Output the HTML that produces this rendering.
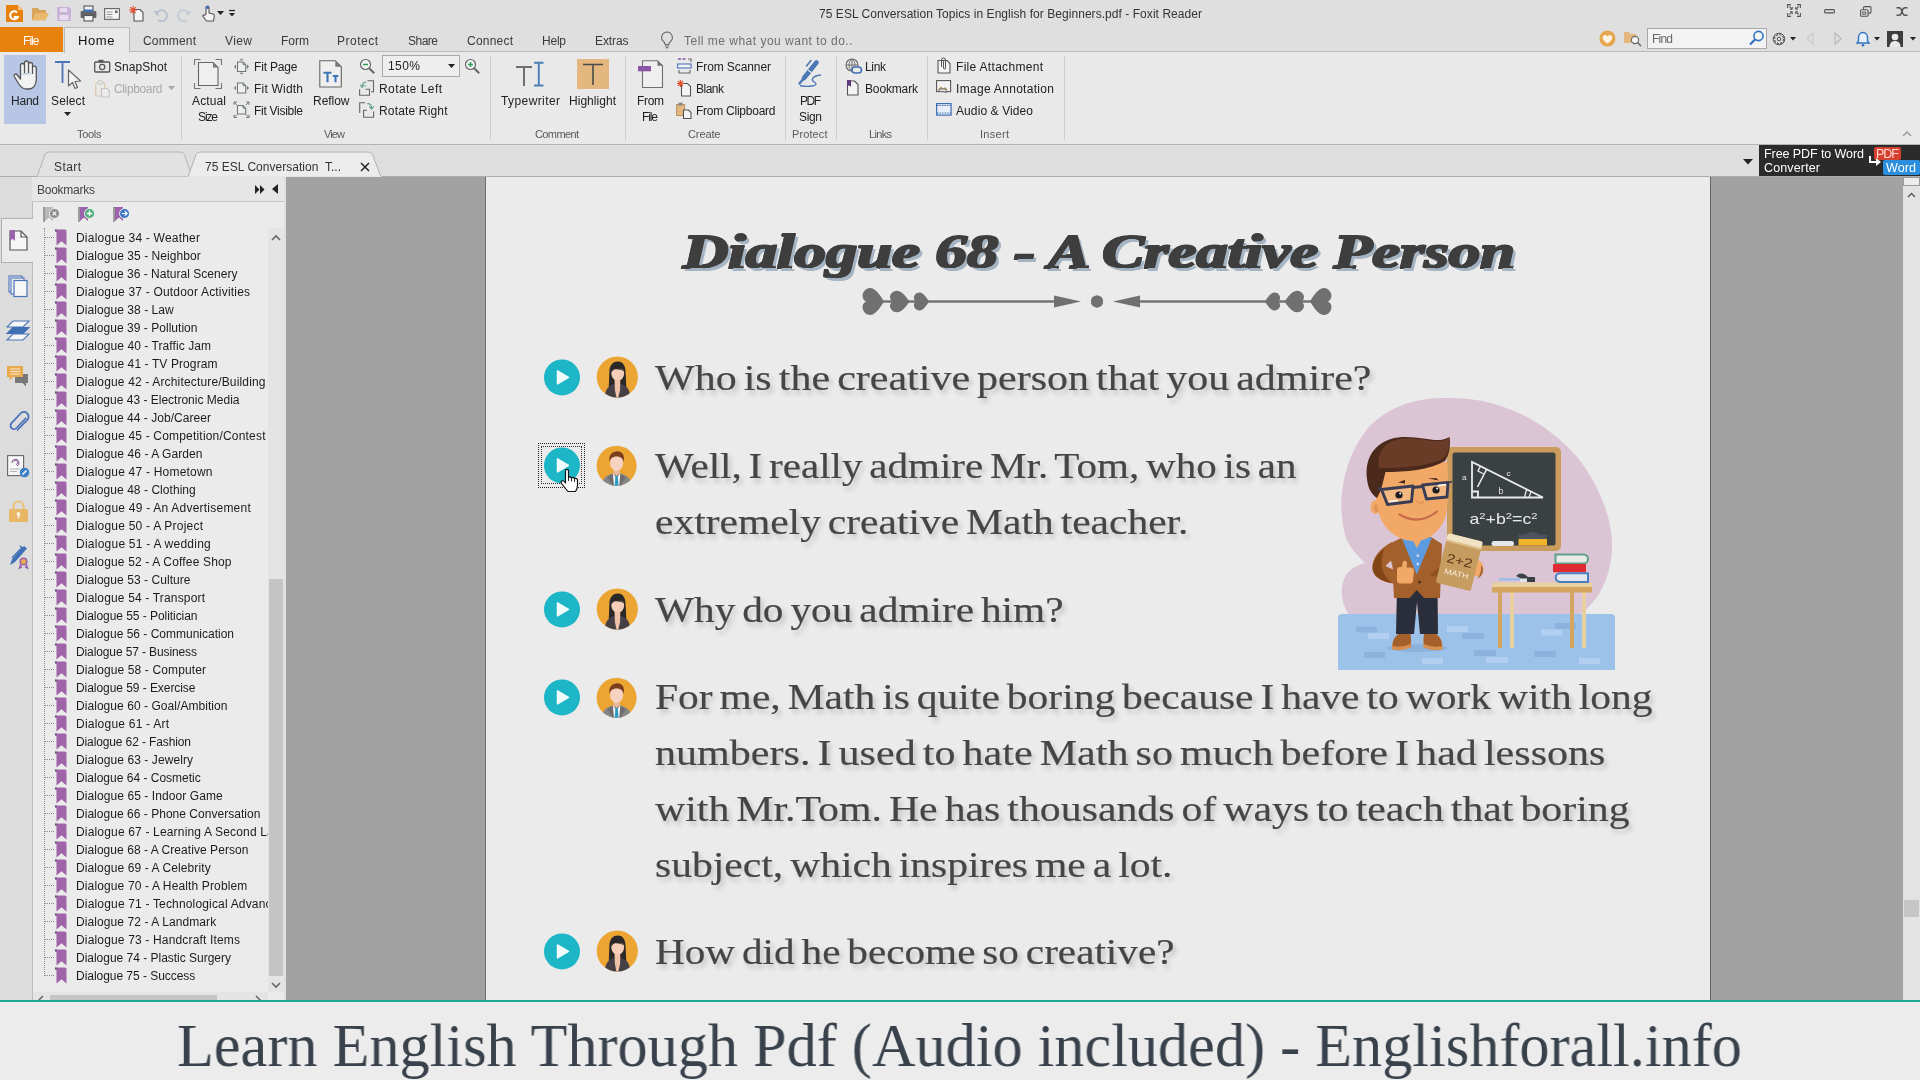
<!DOCTYPE html>
<html><head><meta charset="utf-8"><title>Foxit Reader</title>
<style>
html,body{margin:0;padding:0;overflow:hidden;}
html{width:1920px;height:1080px;}
body{width:1920px;height:1080px;overflow:hidden;position:relative;background:#a2a2a2;font-family:"Liberation Sans", sans-serif;font-size:12px;}
.a{position:absolute;}
span{will-change:transform;}
svg{position:absolute;overflow:visible;}
</style></head><body>
<div class='a' style='left:0px;top:0px;width:1920px;height:52px;background:#dfdfdf;'></div><div class='a' style='left:0px;top:52px;width:1920px;height:93px;background:#e9e9e9;'></div><div class='a' style='left:0px;top:51px;width:1920px;height:1px;background:#b9b9b9;'></div><div class='a' style='left:0px;top:144px;width:1920px;height:1px;background:#b4b4b4;'></div><div class='a' style='left:0px;top:27px;width:63px;height:25px;background:#e8820f;'></div><span style='position:absolute;left:23px;top:32.64px;line-height:16px;color:#ffffff;font-family:"Liberation Sans", sans-serif;font-size:12px;font-weight:400;font-style:normal;white-space:pre;letter-spacing:-0.948px;'>File</span><div class='a' style='left:64px;top:27px;width:66px;height:25px;background:#e9e9e9;border:1px solid #b9b9b9;border-bottom:none;box-sizing:border-box;height:26px;'></div><span style='position:absolute;left:78px;top:32.15px;line-height:17px;color:#111;font-family:"Liberation Sans", sans-serif;font-size:13px;font-weight:400;font-style:normal;white-space:pre;letter-spacing:0.604px;'>Home</span><span style='position:absolute;left:143px;top:32.64px;line-height:16px;color:#3a3a3a;font-family:"Liberation Sans", sans-serif;font-size:12px;font-weight:400;font-style:normal;white-space:pre;letter-spacing:0.164px;'>Comment</span><span style='position:absolute;left:225px;top:32.64px;line-height:16px;color:#3a3a3a;font-family:"Liberation Sans", sans-serif;font-size:12px;font-weight:400;font-style:normal;white-space:pre;letter-spacing:0.401px;'>View</span><span style='position:absolute;left:281px;top:32.64px;line-height:16px;color:#3a3a3a;font-family:"Liberation Sans", sans-serif;font-size:12px;font-weight:400;font-style:normal;white-space:pre;letter-spacing:0.000px;'>Form</span><span style='position:absolute;left:337px;top:32.64px;line-height:16px;color:#3a3a3a;font-family:"Liberation Sans", sans-serif;font-size:12px;font-weight:400;font-style:normal;white-space:pre;letter-spacing:0.497px;'>Protect</span><span style='position:absolute;left:407.5px;top:32.64px;line-height:16px;color:#3a3a3a;font-family:"Liberation Sans", sans-serif;font-size:12px;font-weight:400;font-style:normal;white-space:pre;letter-spacing:-0.508px;'>Share</span><span style='position:absolute;left:467px;top:32.64px;line-height:16px;color:#3a3a3a;font-family:"Liberation Sans", sans-serif;font-size:12px;font-weight:400;font-style:normal;white-space:pre;letter-spacing:0.216px;'>Connect</span><span style='position:absolute;left:542px;top:32.64px;line-height:16px;color:#3a3a3a;font-family:"Liberation Sans", sans-serif;font-size:12px;font-weight:400;font-style:normal;white-space:pre;letter-spacing:-0.229px;'>Help</span><span style='position:absolute;left:595px;top:32.64px;line-height:16px;color:#3a3a3a;font-family:"Liberation Sans", sans-serif;font-size:12px;font-weight:400;font-style:normal;white-space:pre;letter-spacing:-0.103px;'>Extras</span><span style='position:absolute;left:684px;top:32.64px;line-height:16px;color:#6e6e6e;font-family:"Liberation Sans", sans-serif;font-size:12px;font-weight:400;font-style:normal;white-space:pre;letter-spacing:0.491px;'>Tell me what you want to do..</span><svg style='left:660px;top:31px' width='14' height='18' viewBox='0 0 14 18'><path d='M7 1a5.500 5.500 0 0 1 3 10c-.8.800-1 1.500-1 2.500H5c0-1-.2-1.700-1-2.500A5.500 5.500 0 0 1 7 1z' fill='none' stroke='#6a6a6a' stroke-width='1.100'/><path d='M5 15h4M5.500 16.800h3' stroke='#6a6a6a' stroke-width='1.100'/></svg><span style='position:absolute;left:819px;top:5.74px;line-height:16px;color:#333;font-family:"Liberation Sans", sans-serif;font-size:12px;font-weight:400;font-style:normal;white-space:pre;letter-spacing:0.050px;'>75 ESL Conversation Topics in English for Beginners.pdf - Foxit Reader</span><div class='a' style='left:4px;top:55px;width:42px;height:69px;background:#b6c6e4;'></div><div class='a' style='left:382px;top:55px;width:78px;height:22px;background:#eeeeee;border:1px solid #a8a8a8;box-sizing:border-box;'></div><span style='position:absolute;left:11px;top:92.64px;line-height:16px;color:#222;font-family:"Liberation Sans", sans-serif;font-size:12px;font-weight:400;font-style:normal;white-space:pre;letter-spacing:-0.229px;'>Hand</span><span style='position:absolute;left:51px;top:92.64px;line-height:16px;color:#222;font-family:"Liberation Sans", sans-serif;font-size:12px;font-weight:400;font-style:normal;white-space:pre;letter-spacing:0.128px;'>Select</span><span style='position:absolute;left:114px;top:58.64px;line-height:16px;color:#222;font-family:"Liberation Sans", sans-serif;font-size:12px;font-weight:400;font-style:normal;white-space:pre;letter-spacing:0.040px;'>SnapShot</span><span style='position:absolute;left:114px;top:80.64px;line-height:16px;color:#a9a9a9;font-family:"Liberation Sans", sans-serif;font-size:12px;font-weight:400;font-style:normal;white-space:pre;letter-spacing:-0.359px;'>Clipboard</span><span style='position:absolute;left:192px;top:92.64px;line-height:16px;color:#222;font-family:"Liberation Sans", sans-serif;font-size:12px;font-weight:400;font-style:normal;white-space:pre;letter-spacing:0.128px;'>Actual</span><span style='position:absolute;left:197.5px;top:108.64px;line-height:16px;color:#222;font-family:"Liberation Sans", sans-serif;font-size:12px;font-weight:400;font-style:normal;white-space:pre;letter-spacing:-1.115px;'>Size</span><span style='position:absolute;left:254px;top:58.64px;line-height:16px;color:#222;font-family:"Liberation Sans", sans-serif;font-size:12px;font-weight:400;font-style:normal;white-space:pre;letter-spacing:-0.172px;'>Fit Page</span><span style='position:absolute;left:254px;top:80.64px;line-height:16px;color:#222;font-family:"Liberation Sans", sans-serif;font-size:12px;font-weight:400;font-style:normal;white-space:pre;letter-spacing:0.207px;'>Fit Width</span><span style='position:absolute;left:254px;top:102.64px;line-height:16px;color:#222;font-family:"Liberation Sans", sans-serif;font-size:12px;font-weight:400;font-style:normal;white-space:pre;letter-spacing:-0.280px;'>Fit Visible</span><span style='position:absolute;left:313px;top:92.64px;line-height:16px;color:#222;font-family:"Liberation Sans", sans-serif;font-size:12px;font-weight:400;font-style:normal;white-space:pre;letter-spacing:-0.037px;'>Reflow</span><span style='position:absolute;left:387.5px;top:58.14px;line-height:16px;color:#222;font-family:"Liberation Sans", sans-serif;font-size:12px;font-weight:400;font-style:normal;white-space:pre;letter-spacing:0.432px;'>150%</span><span style='position:absolute;left:379px;top:80.64px;line-height:16px;color:#222;font-family:"Liberation Sans", sans-serif;font-size:12px;font-weight:400;font-style:normal;white-space:pre;letter-spacing:0.428px;'>Rotate Left</span><span style='position:absolute;left:379px;top:102.64px;line-height:16px;color:#222;font-family:"Liberation Sans", sans-serif;font-size:12px;font-weight:400;font-style:normal;white-space:pre;letter-spacing:0.163px;'>Rotate Right</span><span style='position:absolute;left:501px;top:92.64px;line-height:16px;color:#222;font-family:"Liberation Sans", sans-serif;font-size:12px;font-weight:400;font-style:normal;white-space:pre;letter-spacing:0.405px;'>Typewriter</span><span style='position:absolute;left:569px;top:92.64px;line-height:16px;color:#222;font-family:"Liberation Sans", sans-serif;font-size:12px;font-weight:400;font-style:normal;white-space:pre;letter-spacing:0.037px;'>Highlight</span><span style='position:absolute;left:637px;top:92.64px;line-height:16px;color:#222;font-family:"Liberation Sans", sans-serif;font-size:12px;font-weight:400;font-style:normal;white-space:pre;letter-spacing:-0.333px;'>From</span><span style='position:absolute;left:642px;top:108.64px;line-height:16px;color:#222;font-family:"Liberation Sans", sans-serif;font-size:12px;font-weight:400;font-style:normal;white-space:pre;letter-spacing:-1.115px;'>File</span><span style='position:absolute;left:696px;top:58.64px;line-height:16px;color:#222;font-family:"Liberation Sans", sans-serif;font-size:12px;font-weight:400;font-style:normal;white-space:pre;letter-spacing:-0.094px;'>From Scanner</span><span style='position:absolute;left:696px;top:80.64px;line-height:16px;color:#222;font-family:"Liberation Sans", sans-serif;font-size:12px;font-weight:400;font-style:normal;white-space:pre;letter-spacing:-0.508px;'>Blank</span><span style='position:absolute;left:696px;top:102.64px;line-height:16px;color:#222;font-family:"Liberation Sans", sans-serif;font-size:12px;font-weight:400;font-style:normal;white-space:pre;letter-spacing:-0.246px;'>From Clipboard</span><span style='position:absolute;left:800px;top:92.64px;line-height:16px;color:#222;font-family:"Liberation Sans", sans-serif;font-size:12px;font-weight:400;font-style:normal;white-space:pre;letter-spacing:-1.500px;'>PDF</span><span style='position:absolute;left:799px;top:108.64px;line-height:16px;color:#222;font-family:"Liberation Sans", sans-serif;font-size:12px;font-weight:400;font-style:normal;white-space:pre;letter-spacing:-0.344px;'>Sign</span><span style='position:absolute;left:865px;top:58.64px;line-height:16px;color:#222;font-family:"Liberation Sans", sans-serif;font-size:12px;font-weight:400;font-style:normal;white-space:pre;letter-spacing:-0.339px;'>Link</span><span style='position:absolute;left:865px;top:80.64px;line-height:16px;color:#222;font-family:"Liberation Sans", sans-serif;font-size:12px;font-weight:400;font-style:normal;white-space:pre;letter-spacing:-0.147px;'>Bookmark</span><span style='position:absolute;left:956px;top:58.64px;line-height:16px;color:#222;font-family:"Liberation Sans", sans-serif;font-size:12px;font-weight:400;font-style:normal;white-space:pre;letter-spacing:0.306px;'>File Attachment</span><span style='position:absolute;left:956px;top:80.64px;line-height:16px;color:#222;font-family:"Liberation Sans", sans-serif;font-size:12px;font-weight:400;font-style:normal;white-space:pre;letter-spacing:0.306px;'>Image Annotation</span><span style='position:absolute;left:956px;top:102.64px;line-height:16px;color:#222;font-family:"Liberation Sans", sans-serif;font-size:12px;font-weight:400;font-style:normal;white-space:pre;letter-spacing:0.096px;'>Audio &amp; Video</span><span style='position:absolute;left:76.5px;top:127.13px;line-height:14px;color:#5a5a5a;font-family:"Liberation Sans", sans-serif;font-size:11px;font-weight:400;font-style:normal;white-space:pre;letter-spacing:-0.297px;'>Tools</span><span style='position:absolute;left:324px;top:127.13px;line-height:14px;color:#5a5a5a;font-family:"Liberation Sans", sans-serif;font-size:11px;font-weight:400;font-style:normal;white-space:pre;letter-spacing:-0.885px;'>View</span><span style='position:absolute;left:535px;top:127.13px;line-height:14px;color:#5a5a5a;font-family:"Liberation Sans", sans-serif;font-size:11px;font-weight:400;font-style:normal;white-space:pre;letter-spacing:-0.615px;'>Comment</span><span style='position:absolute;left:687.5px;top:127.13px;line-height:14px;color:#5a5a5a;font-family:"Liberation Sans", sans-serif;font-size:11px;font-weight:400;font-style:normal;white-space:pre;letter-spacing:-0.106px;'>Create</span><span style='position:absolute;left:792px;top:127.13px;line-height:14px;color:#5a5a5a;font-family:"Liberation Sans", sans-serif;font-size:11px;font-weight:400;font-style:normal;white-space:pre;letter-spacing:0.107px;'>Protect</span><span style='position:absolute;left:869px;top:127.13px;line-height:14px;color:#5a5a5a;font-family:"Liberation Sans", sans-serif;font-size:11px;font-weight:400;font-style:normal;white-space:pre;letter-spacing:-0.672px;'>Links</span><span style='position:absolute;left:980px;top:127.13px;line-height:14px;color:#5a5a5a;font-family:"Liberation Sans", sans-serif;font-size:11px;font-weight:400;font-style:normal;white-space:pre;letter-spacing:0.297px;'>Insert</span><div class='a' style='left:181px;top:56px;width:1px;height:84px;background:#cfcfcf;'></div><div class='a' style='left:490px;top:56px;width:1px;height:84px;background:#cfcfcf;'></div><div class='a' style='left:625px;top:56px;width:1px;height:84px;background:#cfcfcf;'></div><div class='a' style='left:785px;top:56px;width:1px;height:84px;background:#cfcfcf;'></div><div class='a' style='left:836px;top:56px;width:1px;height:84px;background:#cfcfcf;'></div><div class='a' style='left:927px;top:56px;width:1px;height:84px;background:#cfcfcf;'></div><div class='a' style='left:1064px;top:56px;width:1px;height:84px;background:#cfcfcf;'></div><svg style='left:448px;top:64px' width='8' height='5' viewBox='0 0 8 5'><path d='M0 0h7l-3.5 4z' fill='#222'/></svg><svg style='left:64px;top:112px' width='8' height='5' viewBox='0 0 8 5'><path d='M0 0h7l-3.5 4z' fill='#222'/></svg><svg style='left:168px;top:86px' width='8' height='5' viewBox='0 0 8 5'><path d='M0 0h7l-3.5 4z' fill='#a5a5a5'/></svg><div class='a' style='left:577px;top:59px;width:32px;height:30px;background:#e3b77d;'></div><svg style='left:577px;top:59px' width='32' height='30' viewBox='0 0 32 30'><path d='M6 5.500h20M16 5.500V26' stroke='#4a4a4a' stroke-width='1.6' fill='none'/></svg><svg style='left:512px;top:59px' width='36' height='30' viewBox='0 0 36 30'><path d='M4 8h16M12 8V27' stroke='#6f6f6f' stroke-width='2' fill='none'/><path d='M22 3.800h9.500M22 26.500h9.500M26.800 3.800v22.700' stroke='#4b7fb8' stroke-width='1.900' fill='none'/></svg><svg style='left:10px;top:58px' width='30' height='34' viewBox='0 0 30 34'><path d='M10.500 17V7.500a2 2 0 0 1 4 0V15 M14.500 15V5a2 2 0 0 1 4 0V15 M18.500 15V6.500a2 2 0 0 1 4 0V16 M22.500 16V10a1.900 1.900 0 0 1 3.800 0V21c0 6-3 10-8 10h-2c-3.500 0-5.500-2-7.500-5l-4.500-7.500c-1-2 1.500-3.500 3-1.500l3.200 4V17' fill='#f2f2f2' stroke='#555' stroke-width='1.300' stroke-linejoin='round'/></svg><svg style='left:54px;top:60px' width='30' height='34' viewBox='0 0 30 34'><path d='M1 2h15M8.500 2V23' stroke='#4b74b8' stroke-width='1.800' fill='none'/><path d='M14.500 10v16l4-3.500 2.500 6 2.500-1-2.500-6 5.500-.5z' fill='#f4f4f4' stroke='#666' stroke-width='1.200' stroke-linejoin='round'/></svg><svg style='left:94px;top:59px' width='17' height='14' viewBox='0 0 17 14'><rect x='.7' y='3' width='15' height='10' rx='1' fill='none' stroke='#555' stroke-width='1.300'/><rect x='4.500' y='.8' width='5' height='2.500' fill='#555'/><circle cx='8.200' cy='8' r='2.600' fill='none' stroke='#555' stroke-width='1.200'/></svg><svg style='left:95px;top:80px' width='15' height='18' viewBox='0 0 15 18'><rect x='.7' y='3' width='9' height='13' rx='1' fill='none' stroke='#dcc7ad' stroke-width='1.200'/><rect x='3' y='.8' width='4.500' height='3.500' rx='1' fill='#e9e9e9' stroke='#c3c3c3' stroke-width='1'/><path d='M6.500 8.500h5.500l2.300 2.300V17h-7.800z' fill='#ececec' stroke='#c3c3c3' stroke-width='1.100'/></svg><svg style='left:193px;top:58px' width='30' height='32' viewBox='0 0 30 32'><path d='M1.500 7V1.500h6M22.500 1.500h6V7M1.500 25v5.500h6M22.500 30.500h6V25' fill='none' stroke='#777' stroke-width='1.100'/><path d='M5.500 4.500h14.500l5 5V27.500H5.500z' fill='#efefef' stroke='#666' stroke-width='1.100'/><path d='M20 4.500v5h5z' fill='#777'/></svg><svg style='left:233px;top:57.5px' width='17' height='17' viewBox='0 0 17 17'><path d='M4.500 4h5.500l2.700 2.700V13.5H4.500z' fill='#efefef' stroke='#6f7876' stroke-width='1.100'/><path d='M10 4v2.700h2.700' fill='none' stroke='#6f7876' stroke-width='.9'/><path d='M8.500 .5l2 1.700h-4zM8.500 16.500l2-1.700h-4zM1 8.700l2-2.200v4.400zM16 8.700l-2-2.200v4.400z' fill='#6f7876'/></svg><svg style='left:233px;top:79.5px' width='17' height='17' viewBox='0 0 17 17'><path d='M4.500 3h5.500l2.700 2.700V13H4.500z' fill='#efefef' stroke='#6f7876' stroke-width='1.100'/><path d='M10 3v2.700h2.700' fill='none' stroke='#6f7876' stroke-width='.9'/><path d='M1 8l2-2.200v4.400zM16 8l-2-2.200v4.400z' fill='#6f7876'/></svg><svg style='left:233px;top:101px' width='17' height='17' viewBox='0 0 17 17'><path d='M4.500 4.5h5.500l2.700 2.700V13H4.500z' fill='#efefef' stroke='#6f7876' stroke-width='1.100'/><path d='M10 4.5v2.700h2.700' fill='none' stroke='#6f7876' stroke-width='.9'/><path d='M1.500 1.500l2.500 2.500M15.500 1.500l-2.500 2.500M1.500 16l2.500-2.500M15.500 16l-2.500-2.500' stroke='#6f7876' stroke-width='1' fill='none'/><path d='M1 1h2.800M1 1v2.800M16 1h-2.800M16 1v2.800M1 16.500h2.800M1 16.500v-2.800M16 16.500h-2.800M16 16.500v-2.800' stroke='#6f7876' stroke-width='1' fill='none'/></svg><svg style='left:319px;top:60px' width='24' height='28' viewBox='0 0 24 28'><path d='M.8 .8h15.500l6 6V27H.8z' fill='#efefef' stroke='#666' stroke-width='1.100'/><path d='M16.300 .8v6h6z' fill='#777'/><path d='M4.500 12.700h8M8.500 12.700v9.500M13.800 16h5.500M16.500 16v6.200' stroke='#3f74b8' stroke-width='2.100' fill='none'/></svg><svg style='left:359px;top:58px' width='16' height='16' viewBox='0 0 16 16'><circle cx='6.500' cy='6.500' r='5' fill='#f4f4f4' stroke='#666' stroke-width='1.200'/><path d='M10.200 10.200l5 5' stroke='#666' stroke-width='2'/><path d='M4 6.500h5' stroke='#2e9b57' stroke-width='1.500'/></svg><svg style='left:464px;top:58px' width='16' height='16' viewBox='0 0 16 16'><circle cx='6.500' cy='6.500' r='5' fill='#f4f4f4' stroke='#666' stroke-width='1.200'/><path d='M10.200 10.200l5 5' stroke='#666' stroke-width='2'/><path d='M4 6.500h5M6.500 4v5' stroke='#2e9b57' stroke-width='1.500'/></svg><svg style='left:359px;top:80px' width='16' height='16' viewBox='0 0 16 16'><path d='M8.500 .7h6v11h-2.300' fill='none' stroke='#666' stroke-width='1.100'/><path d='M6.500 9.200h4v6H.6v-6' fill='none' stroke='#666' stroke-width='1.100'/><path d='M7 2.200q-3.800 .3-3.800 4.300' fill='none' stroke='#5e9f84' stroke-width='1.200'/><path d='M1 4.800l2.200 2.700 2.200-2.700' fill='none' stroke='#5e9f84' stroke-width='1.100'/><path d='M6.800 5.500v1.200' stroke='#5e9f84' stroke-width='1'/></svg><svg style='left:359px;top:102px' width='16' height='16' viewBox='0 0 16 16'><path d='M.7 11V.7h5.500' fill='none' stroke='#666' stroke-width='1.100'/><path d='M8 8.300H4.600v7h10V9.500' fill='none' stroke='#666' stroke-width='1.100'/><path d='M8.300 1.600q4-.3 4.300 4.500' fill='none' stroke='#5e9f84' stroke-width='1.200'/><path d='M10.400 4.300l2.200 2.800 2.200-2.800' fill='none' stroke='#5e9f84' stroke-width='1.100'/></svg><svg style='left:637px;top:60px' width='27' height='29' viewBox='0 0 27 29'><path d='M5.500 .8h15l5 5V27.500H5.500z' fill='#efefef' stroke='#707070' stroke-width='1.100'/><path d='M20.500 .8v5h5z' fill='#707070'/><rect x='1' y='6' width='13' height='5.300' fill='#8a57a8'/></svg><svg style='left:677px;top:58px' width='15' height='16' viewBox='0 0 15 16'><path d='M1 1h9' stroke='#7b5aa6' stroke-width='1.400' stroke-dasharray='3 1.500'/><path d='M11 1h3v3' fill='none' stroke='#666' stroke-width='1.100'/><rect x='.6' y='6' width='13.500' height='4' fill='#f4f4f4' stroke='#4b74b8' stroke-width='1.100'/><path d='M2 12v3h11v-3' fill='none' stroke='#666' stroke-width='1.100'/></svg><svg style='left:677px;top:80px' width='15' height='17' viewBox='0 0 15 17'><path d='M4.500 3.500h6l3 3V16H4.500z' fill='#f4f4f4' stroke='#555' stroke-width='1.100'/><path d='M3.500 0v7M0 3.500h7M1 1l5 5M6 1l-5 5' stroke='#e0502a' stroke-width='1.100'/></svg><svg style='left:676px;top:102px' width='16' height='17' viewBox='0 0 16 17'><rect x='.6' y='2.500' width='8' height='11' fill='#e3b77d' stroke='#b58a55' stroke-width='.9'/><rect x='2.500' y='.6' width='4' height='3' fill='#888'/><path d='M7.500 8h5l2.500 2.500V16.500H7.500z' fill='#f4f4f4' stroke='#555' stroke-width='1.100'/></svg><svg style='left:797px;top:58px' width='28' height='30' viewBox='0 0 28 30'><path d='M19.500 4.500L7 20' stroke='#4a78b4' stroke-width='4.600' stroke-linecap='round'/><path d='M7.500 19.500L2.500 25.500' stroke='#4a78b4' stroke-width='2.400' stroke-linecap='round'/><path d='M14 2.500L9.500 8' stroke='#4a78b4' stroke-width='1.600' stroke-linecap='round'/><path d='M11 12l4 3' stroke='#e9e9e9' stroke-width='1.100'/><path d='M24 17q-6 .5-8 3t2 4.500q3 2.500-3 3.500t-12-.5' fill='none' stroke='#4a78b4' stroke-width='1.300'/></svg><svg style='left:845px;top:58px' width='17' height='16' viewBox='0 0 17 16'><circle cx='7' cy='7' r='6' fill='none' stroke='#666' stroke-width='1.100'/><path d='M1 7h12M7 1v12M7 1c-4 3-4 9 0 12M7 1c4 3 4 9 0 12' fill='none' stroke='#666' stroke-width='.9'/><rect x='7' y='9' width='9.500' height='6' rx='3' fill='#e9e9e9' stroke='#3f6fb5' stroke-width='1.500'/></svg><svg style='left:846px;top:80px' width='14' height='16' viewBox='0 0 14 16'><path d='M1.500 1h7l3.500 3.500V15H1.500z' fill='#f4f4f4' stroke='#555' stroke-width='1.100'/><path d='M1 0h4v7l-2-1.800L1 7z' fill='#5b3a7e'/></svg><svg style='left:937px;top:57px' width='14' height='17' viewBox='0 0 14 17'><path d='M1 3.500h9l3 3V16H1z' fill='#f4f4f4' stroke='#555' stroke-width='1.100'/><path d='M4.500 10V3a2 2 0 0 1 4 0v8a1 1 0 0 1-2 0V4' fill='none' stroke='#555' stroke-width='1'/></svg><svg style='left:936px;top:80px' width='17' height='16' viewBox='0 0 17 16'><rect x='.6' y='.6' width='14' height='11' fill='#f4f4f4' stroke='#555' stroke-width='1.100'/><path d='M2 10l3-4 2 2.500 2-1.500 3 3z' fill='#c9a46a'/><path d='M3 9h7v4l-2-1.500H3z' fill='#e9e9e9' stroke='#666' stroke-width='.9'/></svg><svg style='left:936px;top:103px' width='16' height='13' viewBox='0 0 16 13'><rect x='.6' y='.6' width='14.500' height='11.500' fill='#e8eef8' stroke='#3f6fb5' stroke-width='1.200'/><path d='M1 2.500h14M1 10h14' stroke='#3f6fb5' stroke-width='1' stroke-dasharray='1.500 1'/></svg><svg style='left:6px;top:5px' width='17' height='17' viewBox='0 0 17 17'><path d='M0 0h12l5 5v12H0z' fill='#e8820f'/><path d='M12 0v5h5z' fill='#f7c48a'/><path d='M11 7.500a4 4 0 1 0 .8 4.500h-4' fill='none' stroke='#fff' stroke-width='2'/></svg><svg style='left:32px;top:6px' width='18' height='15' viewBox='0 0 18 15'><path d='M0 2h6l1.500 2H14v3H4l-3 7H0z' fill='#d9a75b'/><path d='M4 7h13l-3.500 7.500H0.500z' fill='#e9b96e'/></svg><svg style='left:57px;top:7px' width='14' height='14' viewBox='0 0 14 14'><path d='M0 0h12l2 2v12H0z' fill='#c9b2d6'/><rect x='3' y='1' width='7' height='4' fill='#e6dced'/><rect x='2.500' y='8' width='9' height='5' fill='#e6dced'/></svg><svg style='left:80px;top:5px' width='17' height='17' viewBox='0 0 17 17'><rect x='4' y='1' width='9' height='5' fill='#eef2fa' stroke='#555' stroke-width='1.100'/><rect x='.6' y='6' width='15.800' height='7' rx='1' fill='#666'/><rect x='4' y='4.500' width='9' height='2.500' fill='#3f6fb5'/><rect x='4' y='10.500' width='9' height='5.500' fill='#f4f4f4' stroke='#555' stroke-width='1.100'/></svg><svg style='left:104px;top:8px' width='16' height='12' viewBox='0 0 16 12'><rect x='.6' y='.6' width='14.800' height='10.800' fill='#f4f4f4' stroke='#666' stroke-width='1.100'/><path d='M2.500 4h6M2.500 6.500h6M2.500 9h6' stroke='#888' stroke-width='.9'/><rect x='11' y='2.500' width='2.500' height='2.500' fill='#666'/></svg><svg style='left:129px;top:6px' width='15' height='16' viewBox='0 0 15 16'><path d='M5 3.500h6l3 3V15H5z' fill='#f4f4f4' stroke='#555' stroke-width='1.100'/><path d='M4 0v8M0 4h8M1.200 1.200l5.600 5.600M6.800 1.200l-5.600 5.600' stroke='#e0502a' stroke-width='1.100'/></svg><svg style='left:153px;top:7px' width='16' height='14' viewBox='0 0 16 14'><path d='M4 5.500a5.500 5.500 0 1 1 1 7.500' fill='none' stroke='#b6c0cf' stroke-width='1.800'/><path d='M0 4l6 0-1 5.500z' fill='#b6c0cf'/></svg><svg style='left:176px;top:7px' width='16' height='14' viewBox='0 0 16 14'><path d='M12 5.500a5.500 5.500 0 1 0-1 7.500' fill='none' stroke='#c3ccd8' stroke-width='1.800'/><path d='M16 4l-6 0 1 5.500z' fill='#c3ccd8'/></svg><svg style='left:201px;top:5px' width='14' height='17' viewBox='0 0 14 17'><path d='M5 9V2.500a1.500 1.500 0 0 1 3 0V8l4 1c1 .3 1.500 1 1.300 2L12.500 16h-7L2 11.500c-.8-1 .5-2 1.500-1.200z' fill='#f4f4f4' stroke='#555' stroke-width='1.100' stroke-linejoin='round'/><circle cx='6.500' cy='2.500' r='1.600' fill='#3f6fb5'/></svg><svg style='left:217px;top:11px' width='8' height='5' viewBox='0 0 8 5'><path d='M0 0h7l-3.500 4z' fill='#222'/></svg><svg style='left:229px;top:10px' width='8' height='8' viewBox='0 0 8 8'><path d='M0 .5h6' stroke='#222' stroke-width='1.200'/><path d='M0 3h6l-3 3.500z' fill='#222'/></svg><svg style='left:1787px;top:4px' width='14' height='13' viewBox='0 0 14 13'><path d='M.6 4V.6H4M10 .6h3.400V4M.6 9v3.400H4M10 12.400h3.400V9' fill='none' stroke='#555' stroke-width='1.100'/><path d='M2.500 2.500l2.300 2.300M11.500 2.500l-2.300 2.300M2.500 10.500l2.300-2.300M11.500 10.500l-2.300-2.300' stroke='#555' stroke-width='1.100'/><path d='M5.300 3v2.300H3M8.700 3v2.300H11M5.300 10V7.700H3M8.700 10V7.700H11' fill='none' stroke='#555' stroke-width='.9'/></svg><svg style='left:1824px;top:9px' width='11' height='5' viewBox='0 0 11 5'><rect x='.6' y='.6' width='9.800' height='3.300' rx='1' fill='none' stroke='#555' stroke-width='1.100'/></svg><svg style='left:1860px;top:6px' width='12' height='12' viewBox='0 0 12 12'><rect x='3.500' y='.6' width='7.500' height='6.500' rx='1' fill='none' stroke='#555' stroke-width='1.100'/><rect x='.6' y='3.800' width='7.500' height='6.500' rx='1' fill='#dfdfdf' stroke='#555' stroke-width='1.100'/><rect x='2.800' y='6' width='3' height='2.200' fill='none' stroke='#555' stroke-width='.9'/></svg><svg style='left:1896px;top:7px' width='12' height='10' viewBox='0 0 12 10'><path d='M.5 .8h2.500q2 0 3 3.700q1 3.700 3 3.700h2.500M.5 8.200h2.500q2 0 3-3.700q1-3.700 3-3.700h2.500' fill='none' stroke='#555' stroke-width='1.400'/></svg><svg style='left:1599px;top:30px' width='17' height='17' viewBox='0 0 17 17'><circle cx='8.500' cy='8.500' r='8' fill='#e5a64c'/><path d='M8.500 13.500C4 10.500 3.500 8.500 3.800 7a2.400 2.400 0 0 1 4.700-.3A2.400 2.400 0 0 1 13.200 7c.3 1.500-.2 3.500-4.700 6.500z' fill='#fbf3e6'/></svg><svg style='left:1624px;top:31px' width='18' height='16' viewBox='0 0 18 16'><path d='M0 1h5l1.500 2H12v9H0z' fill='#e3b77d'/><circle cx='11' cy='9' r='3.600' fill='#f4f4f4' stroke='#666' stroke-width='1.100'/><path d='M13.500 11.500l3.500 3.500' stroke='#666' stroke-width='1.500'/></svg><div class='a' style='left:1647px;top:28px;width:120px;height:21px;background:#f3f3f3;border:1px solid #a8a8a8;box-sizing:border-box;'></div><span style='position:absolute;left:1652px;top:30.64px;line-height:16px;color:#666;font-family:"Liberation Sans", sans-serif;font-size:12px;font-weight:400;font-style:normal;white-space:pre;letter-spacing:-0.781px;'>Find</span><svg style='left:1749px;top:30px' width='16' height='16' viewBox='0 0 16 16'><circle cx='9.500' cy='6' r='4.600' fill='#f4f4f4' stroke='#2f74c0' stroke-width='1.600'/><path d='M6.300 9.200L1 14.500' stroke='#2f74c0' stroke-width='2.200'/></svg><svg style='left:1772px;top:32px' width='14' height='14' viewBox='0 0 14 14'><circle cx='7' cy='7' r='4.500' fill='none' stroke='#555' stroke-width='1.200' stroke-dasharray='2.200 1.300'/><circle cx='7' cy='7' r='5.800' fill='none' stroke='#555' stroke-width='1' /><circle cx='7' cy='7' r='1.800' fill='none' stroke='#555' stroke-width='1'/></svg><svg style='left:1790px;top:37px' width='7' height='4' viewBox='0 0 7 4'><path d='M0 0h6l-3 3.500z' fill='#222'/></svg><svg style='left:1806px;top:32px' width='8' height='13' viewBox='0 0 8 13'><path d='M7 .8v11.400L1 6.500z' fill='none' stroke='#c9c9c9' stroke-width='1.100'/></svg><svg style='left:1834px;top:32px' width='8' height='13' viewBox='0 0 8 13'><path d='M1 .8v11.400L7 6.500z' fill='none' stroke='#b5b5b5' stroke-width='1.100'/></svg><svg style='left:1856px;top:31px' width='14' height='16' viewBox='0 0 14 16'><path d='M7 1.500c-3 0-4.500 2.500-4.500 5v3.500L1 12h12l-1.500-2V6.500c0-2.500-1.500-5-4.500-5z' fill='#e8f0fb' stroke='#2f74c0' stroke-width='1.400'/><circle cx='7' cy='14.300' r='1.300' fill='#2f74c0'/></svg><svg style='left:1874px;top:37px' width='7' height='4' viewBox='0 0 7 4'><path d='M0 0h6l-3 3.500z' fill='#222'/></svg><svg style='left:1887px;top:31px' width='16' height='16' viewBox='0 0 16 16'><rect width='16' height='16' fill='#3d3d3d'/><circle cx='8' cy='6' r='3.300' fill='#e8e8e8'/><path d='M2.500 16c0-4 2.500-6 5.500-6s5.500 2 5.500 6z' fill='#e8e8e8'/></svg><svg style='left:1910px;top:37px' width='7' height='4' viewBox='0 0 7 4'><path d='M0 0h6l-3 3.500z' fill='#222'/></svg><svg style='left:1902px;top:131px' width='10' height='6' viewBox='0 0 10 6'><path d='M1 5l4-4 4 4' fill='none' stroke='#999' stroke-width='1.500'/></svg><div class='a' style='left:0px;top:145px;width:1920px;height:32px;background:#dedede;'></div><div class='a' style='left:0px;top:176px;width:1920px;height:1px;background:#ababab;'></div><svg style='left:30px;top:150px' width='170' height='27' viewBox='0 0 170 27'><path d='M7 26.500L15 4.500Q16.500 2 19 2H150Q153 2 154.500 4.500L162 26.500' fill='#e2e2e2' stroke='#b3b3b3' stroke-width='1'/></svg><svg style='left:182px;top:150px' width='205' height='27' viewBox='0 0 205 27'><path d='M6 27L14 4.500Q15.500 2 18 2H186Q189 2 190.500 4.500L199 27z' fill='#ececec' stroke='#b3b3b3' stroke-width='1'/><path d='M6 27H199' stroke='#ececec' stroke-width='1.500'/></svg><span style='position:absolute;left:54px;top:158.64px;line-height:16px;color:#333;font-family:"Liberation Sans", sans-serif;font-size:12px;font-weight:400;font-style:normal;white-space:pre;letter-spacing:0.414px;'>Start</span><span style='position:absolute;left:205px;top:158.64px;line-height:16px;color:#333;font-family:"Liberation Sans", sans-serif;font-size:12px;font-weight:400;font-style:normal;white-space:pre;letter-spacing:0.024px;'>75 ESL Conversation  T...</span><svg style='left:360px;top:162px' width='10' height='10' viewBox='0 0 10 10'><path d='M1 1l8 8M9 1l-8 8' stroke='#222' stroke-width='1.500'/></svg><svg style='left:1743px;top:159px' width='11' height='6' viewBox='0 0 11 6'><path d='M0 0h10l-5 5.500z' fill='#222'/></svg><div class='a' style='left:1759px;top:145px;width:161px;height:31px;background:#2b2b2b;'></div><span style='position:absolute;left:1764px;top:145.64px;line-height:16px;color:#fff;font-family:"Liberation Sans", sans-serif;font-size:12.5px;font-weight:400;font-style:normal;white-space:pre;letter-spacing:-0.079px;'>Free PDF to Word</span><span style='position:absolute;left:1764px;top:159.64px;line-height:16px;color:#fff;font-family:"Liberation Sans", sans-serif;font-size:12.5px;font-weight:400;font-style:normal;white-space:pre;letter-spacing:0.139px;'>Converter</span><div class='a' style='left:1874px;top:147px;width:27px;height:13px;background:#d6402f;border-radius:2px;'></div><span style='position:absolute;left:1876px;top:145.64px;line-height:16px;color:#ffd9d2;font-family:"Liberation Sans", sans-serif;font-size:12.5px;font-weight:400;font-style:normal;white-space:pre;letter-spacing:-1.000px;'>PDF</span><div class='a' style='left:1883px;top:160px;width:37px;height:15px;background:#2b8fdd;border-radius:2px;'></div><span style='position:absolute;left:1886px;top:159.64px;line-height:16px;color:#fff;font-family:"Liberation Sans", sans-serif;font-size:12.5px;font-weight:400;font-style:normal;white-space:pre;letter-spacing:0.120px;'>Word</span><svg style='left:1868px;top:156px' width='14' height='12' viewBox='0 0 14 12'><path d='M2 0v6h8' fill='none' stroke='#fff' stroke-width='2'/><path d='M8 2l5 4-5 4z' fill='#fff'/></svg><div class='a' style='left:0px;top:177px;width:286px;height:823px;background:#e6e6e6;'></div><div class='a' style='left:0px;top:177px;width:32px;height:823px;background:#dcdcdc;'></div><div class='a' style='left:32px;top:201px;width:1px;height:799px;background:#bdbdbd;'></div><div class='a' style='left:32px;top:201px;width:252px;height:1px;background:#c4c4c4;'></div><div class='a' style='left:33px;top:202px;width:251px;height:798px;background:#ebebeb;'></div><div class='a' style='left:284px;top:177px;width:2px;height:823px;background:#e0e0e0;'></div><div class='a' style='left:1px;top:218px;width:32px;height:45px;background:#ebebeb;border:1px solid #b0b0b0;border-right:none;box-sizing:border-box;'></div><span style='position:absolute;left:37px;top:181.64px;line-height:16px;color:#444;font-family:"Liberation Sans", sans-serif;font-size:12px;font-weight:400;font-style:normal;white-space:pre;letter-spacing:-0.254px;'>Bookmarks</span><svg style='left:255px;top:185px' width='10' height='9' viewBox='0 0 10 9'><path d='M0 0l4.500 4.500L0 9zM5 0l4.500 4.500L5 9z' fill='#222'/></svg><svg style='left:272px;top:184px' width='6' height='10' viewBox='0 0 6 10'><path d='M6 0v10L0 5z' fill='#222'/></svg><svg style='left:43px;top:206px' width='18' height='18' viewBox='0 0 18 18'><path d='M1 1h9v14l-4-3.500L2 15V2' fill='#b8b8b8'/><path d='M1 1v15' stroke='#666' stroke-width='1.200'/><circle cx='11.500' cy='7.500' r='5' fill='#8c8c8c' stroke='#f0f0f0' stroke-width='1'/><path d='M9.700 5.700l3.600 3.600M13.300 5.700l-3.600 3.600' stroke='#fff' stroke-width='1.200'/></svg><svg style='left:78px;top:206px' width='18' height='18' viewBox='0 0 18 18'><path d='M1 1h9v14l-4-3.500L2 15V2' fill='#9a63ab'/><path d='M1 1v15' stroke='#666' stroke-width='1.200'/><circle cx='11.500' cy='7.500' r='5' fill='#4fae7a' stroke='#f0f0f0' stroke-width='1'/><path d='M8.800 7.500h5.400M11.500 4.800v5.400' stroke='#fff' stroke-width='1.300'/></svg><svg style='left:113px;top:206px' width='18' height='18' viewBox='0 0 18 18'><path d='M1 1h9v14l-4-3.500L2 15V2' fill='#9a63ab'/><path d='M1 1v15' stroke='#666' stroke-width='1.200'/><circle cx='11.500' cy='7.500' r='5' fill='#3f78c2' stroke='#f0f0f0' stroke-width='1'/><path d='M8.800 7.500h5M11.800 5.200l2.300 2.300-2.300 2.300' stroke='#fff' stroke-width='1.200' fill='none'/></svg><div class='a' style='left:33px;top:228px;width:235px;height:764px;overflow:hidden;'><div class='a' style='left:11px;top:0;width:0;height:748px;border-left:1px dotted #8a8a8a;'></div><div class='a' style='left:12px;top:9px;width:9px;height:0;border-top:1px dotted #8a8a8a;'></div><svg style='left:22px;top:1px' width='12' height='17' viewBox='0 0 12 17'><path d='M.5 .5h9.500q1.500 0 1.500 1.500V16.500l-5-4.200-5 4.200V3.500q0-1.500-1.500-1.500z' fill='#a064a8'/><path d='M0 .5h1.500v2H0z' fill='#6f3f7a'/></svg><span style='position:absolute;left:43px;top:1.64px;line-height:16px;color:#1c1c1c;font-family:"Liberation Sans", sans-serif;font-size:12px;font-weight:400;font-style:normal;white-space:pre;letter-spacing:0.207px;'>Dialogue 34 - Weather</span><div class='a' style='left:12px;top:27px;width:9px;height:0;border-top:1px dotted #8a8a8a;'></div><svg style='left:22px;top:19px' width='12' height='17' viewBox='0 0 12 17'><path d='M.5 .5h9.500q1.500 0 1.500 1.500V16.500l-5-4.200-5 4.200V3.500q0-1.500-1.500-1.500z' fill='#a064a8'/><path d='M0 .5h1.500v2H0z' fill='#6f3f7a'/></svg><span style='position:absolute;left:43px;top:19.64px;line-height:16px;color:#1c1c1c;font-family:"Liberation Sans", sans-serif;font-size:12px;font-weight:400;font-style:normal;white-space:pre;letter-spacing:0.063px;'>Dialogue 35 - Neighbor</span><div class='a' style='left:12px;top:45px;width:9px;height:0;border-top:1px dotted #8a8a8a;'></div><svg style='left:22px;top:37px' width='12' height='17' viewBox='0 0 12 17'><path d='M.5 .5h9.500q1.500 0 1.500 1.500V16.500l-5-4.200-5 4.200V3.500q0-1.500-1.500-1.500z' fill='#a064a8'/><path d='M0 .5h1.500v2H0z' fill='#6f3f7a'/></svg><span style='position:absolute;left:43px;top:37.64px;line-height:16px;color:#1c1c1c;font-family:"Liberation Sans", sans-serif;font-size:12px;font-weight:400;font-style:normal;white-space:pre;letter-spacing:0.026px;'>Dialogue 36 - Natural Scenery</span><div class='a' style='left:12px;top:63px;width:9px;height:0;border-top:1px dotted #8a8a8a;'></div><svg style='left:22px;top:55px' width='12' height='17' viewBox='0 0 12 17'><path d='M.5 .5h9.500q1.500 0 1.500 1.500V16.500l-5-4.200-5 4.200V3.500q0-1.500-1.500-1.500z' fill='#a064a8'/><path d='M0 .5h1.500v2H0z' fill='#6f3f7a'/></svg><span style='position:absolute;left:43px;top:55.64px;line-height:16px;color:#1c1c1c;font-family:"Liberation Sans", sans-serif;font-size:12px;font-weight:400;font-style:normal;white-space:pre;letter-spacing:0.191px;'>Dialogue 37 - Outdoor Activities</span><div class='a' style='left:12px;top:81px;width:9px;height:0;border-top:1px dotted #8a8a8a;'></div><svg style='left:22px;top:73px' width='12' height='17' viewBox='0 0 12 17'><path d='M.5 .5h9.500q1.500 0 1.500 1.500V16.500l-5-4.200-5 4.200V3.500q0-1.500-1.500-1.500z' fill='#a064a8'/><path d='M0 .5h1.500v2H0z' fill='#6f3f7a'/></svg><span style='position:absolute;left:43px;top:73.64px;line-height:16px;color:#1c1c1c;font-family:"Liberation Sans", sans-serif;font-size:12px;font-weight:400;font-style:normal;white-space:pre;letter-spacing:0.063px;'>Dialogue 38 - Law</span><div class='a' style='left:12px;top:99px;width:9px;height:0;border-top:1px dotted #8a8a8a;'></div><svg style='left:22px;top:91px' width='12' height='17' viewBox='0 0 12 17'><path d='M.5 .5h9.500q1.500 0 1.500 1.500V16.500l-5-4.200-5 4.200V3.500q0-1.500-1.500-1.500z' fill='#a064a8'/><path d='M0 .5h1.500v2H0z' fill='#6f3f7a'/></svg><span style='position:absolute;left:43px;top:91.64px;line-height:16px;color:#1c1c1c;font-family:"Liberation Sans", sans-serif;font-size:12px;font-weight:400;font-style:normal;white-space:pre;letter-spacing:0.034px;'>Dialogue 39 - Pollution</span><div class='a' style='left:12px;top:117px;width:9px;height:0;border-top:1px dotted #8a8a8a;'></div><svg style='left:22px;top:109px' width='12' height='17' viewBox='0 0 12 17'><path d='M.5 .5h9.500q1.500 0 1.500 1.500V16.500l-5-4.200-5 4.200V3.500q0-1.500-1.500-1.500z' fill='#a064a8'/><path d='M0 .5h1.500v2H0z' fill='#6f3f7a'/></svg><span style='position:absolute;left:43px;top:109.64px;line-height:16px;color:#1c1c1c;font-family:"Liberation Sans", sans-serif;font-size:12px;font-weight:400;font-style:normal;white-space:pre;letter-spacing:0.076px;'>Dialogue 40 - Traffic Jam</span><div class='a' style='left:12px;top:135px;width:9px;height:0;border-top:1px dotted #8a8a8a;'></div><svg style='left:22px;top:127px' width='12' height='17' viewBox='0 0 12 17'><path d='M.5 .5h9.500q1.500 0 1.500 1.500V16.500l-5-4.200-5 4.200V3.500q0-1.500-1.500-1.500z' fill='#a064a8'/><path d='M0 .5h1.500v2H0z' fill='#6f3f7a'/></svg><span style='position:absolute;left:43px;top:127.64px;line-height:16px;color:#1c1c1c;font-family:"Liberation Sans", sans-serif;font-size:12px;font-weight:400;font-style:normal;white-space:pre;letter-spacing:0.101px;'>Dialogue 41 - TV Program</span><div class='a' style='left:12px;top:153px;width:9px;height:0;border-top:1px dotted #8a8a8a;'></div><svg style='left:22px;top:145px' width='12' height='17' viewBox='0 0 12 17'><path d='M.5 .5h9.500q1.500 0 1.500 1.500V16.500l-5-4.200-5 4.200V3.500q0-1.500-1.500-1.500z' fill='#a064a8'/><path d='M0 .5h1.500v2H0z' fill='#6f3f7a'/></svg><span style='position:absolute;left:43px;top:145.64px;line-height:16px;color:#1c1c1c;font-family:"Liberation Sans", sans-serif;font-size:12px;font-weight:400;font-style:normal;white-space:pre;letter-spacing:0.159px;'>Dialogue 42 - Architecture/Building</span><div class='a' style='left:12px;top:171px;width:9px;height:0;border-top:1px dotted #8a8a8a;'></div><svg style='left:22px;top:163px' width='12' height='17' viewBox='0 0 12 17'><path d='M.5 .5h9.500q1.500 0 1.500 1.500V16.500l-5-4.200-5 4.200V3.500q0-1.500-1.500-1.500z' fill='#a064a8'/><path d='M0 .5h1.500v2H0z' fill='#6f3f7a'/></svg><span style='position:absolute;left:43px;top:163.64px;line-height:16px;color:#1c1c1c;font-family:"Liberation Sans", sans-serif;font-size:12px;font-weight:400;font-style:normal;white-space:pre;letter-spacing:0.003px;'>Dialogue 43 - Electronic Media</span><div class='a' style='left:12px;top:189px;width:9px;height:0;border-top:1px dotted #8a8a8a;'></div><svg style='left:22px;top:181px' width='12' height='17' viewBox='0 0 12 17'><path d='M.5 .5h9.500q1.500 0 1.500 1.500V16.500l-5-4.200-5 4.200V3.500q0-1.500-1.500-1.500z' fill='#a064a8'/><path d='M0 .5h1.500v2H0z' fill='#6f3f7a'/></svg><span style='position:absolute;left:43px;top:181.64px;line-height:16px;color:#1c1c1c;font-family:"Liberation Sans", sans-serif;font-size:12px;font-weight:400;font-style:normal;white-space:pre;letter-spacing:0.040px;'>Dialogue 44 - Job/Career</span><div class='a' style='left:12px;top:207px;width:9px;height:0;border-top:1px dotted #8a8a8a;'></div><svg style='left:22px;top:199px' width='12' height='17' viewBox='0 0 12 17'><path d='M.5 .5h9.500q1.500 0 1.500 1.500V16.500l-5-4.200-5 4.200V3.500q0-1.500-1.500-1.500z' fill='#a064a8'/><path d='M0 .5h1.500v2H0z' fill='#6f3f7a'/></svg><span style='position:absolute;left:43px;top:199.64px;line-height:16px;color:#1c1c1c;font-family:"Liberation Sans", sans-serif;font-size:12px;font-weight:400;font-style:normal;white-space:pre;letter-spacing:0.189px;'>Dialogue 45 - Competition/Contest</span><div class='a' style='left:12px;top:225px;width:9px;height:0;border-top:1px dotted #8a8a8a;'></div><svg style='left:22px;top:217px' width='12' height='17' viewBox='0 0 12 17'><path d='M.5 .5h9.500q1.500 0 1.500 1.500V16.500l-5-4.200-5 4.200V3.500q0-1.500-1.500-1.500z' fill='#a064a8'/><path d='M0 .5h1.500v2H0z' fill='#6f3f7a'/></svg><span style='position:absolute;left:43px;top:217.64px;line-height:16px;color:#1c1c1c;font-family:"Liberation Sans", sans-serif;font-size:12px;font-weight:400;font-style:normal;white-space:pre;letter-spacing:0.083px;'>Dialogue 46 - A Garden</span><div class='a' style='left:12px;top:243px;width:9px;height:0;border-top:1px dotted #8a8a8a;'></div><svg style='left:22px;top:235px' width='12' height='17' viewBox='0 0 12 17'><path d='M.5 .5h9.500q1.500 0 1.500 1.500V16.500l-5-4.200-5 4.200V3.500q0-1.500-1.500-1.500z' fill='#a064a8'/><path d='M0 .5h1.500v2H0z' fill='#6f3f7a'/></svg><span style='position:absolute;left:43px;top:235.64px;line-height:16px;color:#1c1c1c;font-family:"Liberation Sans", sans-serif;font-size:12px;font-weight:400;font-style:normal;white-space:pre;letter-spacing:0.211px;'>Dialogue 47 - Hometown</span><div class='a' style='left:12px;top:261px;width:9px;height:0;border-top:1px dotted #8a8a8a;'></div><svg style='left:22px;top:253px' width='12' height='17' viewBox='0 0 12 17'><path d='M.5 .5h9.500q1.500 0 1.500 1.500V16.500l-5-4.200-5 4.200V3.500q0-1.500-1.500-1.500z' fill='#a064a8'/><path d='M0 .5h1.500v2H0z' fill='#6f3f7a'/></svg><span style='position:absolute;left:43px;top:253.64px;line-height:16px;color:#1c1c1c;font-family:"Liberation Sans", sans-serif;font-size:12px;font-weight:400;font-style:normal;white-space:pre;letter-spacing:0.048px;'>Dialogue 48 - Clothing</span><div class='a' style='left:12px;top:279px;width:9px;height:0;border-top:1px dotted #8a8a8a;'></div><svg style='left:22px;top:271px' width='12' height='17' viewBox='0 0 12 17'><path d='M.5 .5h9.500q1.500 0 1.500 1.500V16.500l-5-4.200-5 4.200V3.500q0-1.500-1.500-1.500z' fill='#a064a8'/><path d='M0 .5h1.500v2H0z' fill='#6f3f7a'/></svg><span style='position:absolute;left:43px;top:271.64px;line-height:16px;color:#1c1c1c;font-family:"Liberation Sans", sans-serif;font-size:12px;font-weight:400;font-style:normal;white-space:pre;letter-spacing:0.229px;'>Dialogue 49 - An Advertisement</span><div class='a' style='left:12px;top:297px;width:9px;height:0;border-top:1px dotted #8a8a8a;'></div><svg style='left:22px;top:289px' width='12' height='17' viewBox='0 0 12 17'><path d='M.5 .5h9.500q1.500 0 1.500 1.500V16.500l-5-4.200-5 4.200V3.500q0-1.500-1.500-1.500z' fill='#a064a8'/><path d='M0 .5h1.500v2H0z' fill='#6f3f7a'/></svg><span style='position:absolute;left:43px;top:289.64px;line-height:16px;color:#1c1c1c;font-family:"Liberation Sans", sans-serif;font-size:12px;font-weight:400;font-style:normal;white-space:pre;letter-spacing:0.224px;'>Dialogue 50 - A Project</span><div class='a' style='left:12px;top:315px;width:9px;height:0;border-top:1px dotted #8a8a8a;'></div><svg style='left:22px;top:307px' width='12' height='17' viewBox='0 0 12 17'><path d='M.5 .5h9.500q1.500 0 1.500 1.500V16.500l-5-4.200-5 4.200V3.500q0-1.500-1.500-1.500z' fill='#a064a8'/><path d='M0 .5h1.500v2H0z' fill='#6f3f7a'/></svg><span style='position:absolute;left:43px;top:307.64px;line-height:16px;color:#1c1c1c;font-family:"Liberation Sans", sans-serif;font-size:12px;font-weight:400;font-style:normal;white-space:pre;letter-spacing:0.241px;'>Dialogue 51 - A wedding</span><div class='a' style='left:12px;top:333px;width:9px;height:0;border-top:1px dotted #8a8a8a;'></div><svg style='left:22px;top:325px' width='12' height='17' viewBox='0 0 12 17'><path d='M.5 .5h9.500q1.500 0 1.500 1.500V16.500l-5-4.200-5 4.200V3.500q0-1.500-1.500-1.500z' fill='#a064a8'/><path d='M0 .5h1.500v2H0z' fill='#6f3f7a'/></svg><span style='position:absolute;left:43px;top:325.64px;line-height:16px;color:#1c1c1c;font-family:"Liberation Sans", sans-serif;font-size:12px;font-weight:400;font-style:normal;white-space:pre;letter-spacing:0.164px;'>Dialogue 52 - A Coffee Shop</span><div class='a' style='left:12px;top:351px;width:9px;height:0;border-top:1px dotted #8a8a8a;'></div><svg style='left:22px;top:343px' width='12' height='17' viewBox='0 0 12 17'><path d='M.5 .5h9.500q1.500 0 1.500 1.500V16.500l-5-4.200-5 4.200V3.500q0-1.500-1.500-1.500z' fill='#a064a8'/><path d='M0 .5h1.500v2H0z' fill='#6f3f7a'/></svg><span style='position:absolute;left:43px;top:343.64px;line-height:16px;color:#1c1c1c;font-family:"Liberation Sans", sans-serif;font-size:12px;font-weight:400;font-style:normal;white-space:pre;letter-spacing:0.055px;'>Dialogue 53 - Culture</span><div class='a' style='left:12px;top:369px;width:9px;height:0;border-top:1px dotted #8a8a8a;'></div><svg style='left:22px;top:361px' width='12' height='17' viewBox='0 0 12 17'><path d='M.5 .5h9.500q1.500 0 1.500 1.500V16.500l-5-4.200-5 4.200V3.500q0-1.500-1.500-1.500z' fill='#a064a8'/><path d='M0 .5h1.500v2H0z' fill='#6f3f7a'/></svg><span style='position:absolute;left:43px;top:361.64px;line-height:16px;color:#1c1c1c;font-family:"Liberation Sans", sans-serif;font-size:12px;font-weight:400;font-style:normal;white-space:pre;letter-spacing:0.163px;'>Dialogue 54 - Transport</span><div class='a' style='left:12px;top:387px;width:9px;height:0;border-top:1px dotted #8a8a8a;'></div><svg style='left:22px;top:379px' width='12' height='17' viewBox='0 0 12 17'><path d='M.5 .5h9.500q1.500 0 1.500 1.500V16.500l-5-4.200-5 4.200V3.500q0-1.500-1.500-1.500z' fill='#a064a8'/><path d='M0 .5h1.500v2H0z' fill='#6f3f7a'/></svg><span style='position:absolute;left:43px;top:379.64px;line-height:16px;color:#1c1c1c;font-family:"Liberation Sans", sans-serif;font-size:12px;font-weight:400;font-style:normal;white-space:pre;letter-spacing:-0.054px;'>Dialogue 55 - Politician</span><div class='a' style='left:12px;top:405px;width:9px;height:0;border-top:1px dotted #8a8a8a;'></div><svg style='left:22px;top:397px' width='12' height='17' viewBox='0 0 12 17'><path d='M.5 .5h9.500q1.500 0 1.500 1.500V16.500l-5-4.200-5 4.200V3.500q0-1.500-1.500-1.500z' fill='#a064a8'/><path d='M0 .5h1.500v2H0z' fill='#6f3f7a'/></svg><span style='position:absolute;left:43px;top:397.64px;line-height:16px;color:#1c1c1c;font-family:"Liberation Sans", sans-serif;font-size:12px;font-weight:400;font-style:normal;white-space:pre;letter-spacing:-0.004px;'>Dialogue 56 - Communication</span><div class='a' style='left:12px;top:423px;width:9px;height:0;border-top:1px dotted #8a8a8a;'></div><svg style='left:22px;top:415px' width='12' height='17' viewBox='0 0 12 17'><path d='M.5 .5h9.500q1.500 0 1.500 1.500V16.500l-5-4.200-5 4.200V3.500q0-1.500-1.500-1.500z' fill='#a064a8'/><path d='M0 .5h1.500v2H0z' fill='#6f3f7a'/></svg><span style='position:absolute;left:43px;top:415.64px;line-height:16px;color:#1c1c1c;font-family:"Liberation Sans", sans-serif;font-size:12px;font-weight:400;font-style:normal;white-space:pre;letter-spacing:-0.115px;'>Dialogue 57 - Business</span><div class='a' style='left:12px;top:441px;width:9px;height:0;border-top:1px dotted #8a8a8a;'></div><svg style='left:22px;top:433px' width='12' height='17' viewBox='0 0 12 17'><path d='M.5 .5h9.500q1.500 0 1.500 1.500V16.500l-5-4.200-5 4.200V3.500q0-1.500-1.500-1.500z' fill='#a064a8'/><path d='M0 .5h1.500v2H0z' fill='#6f3f7a'/></svg><span style='position:absolute;left:43px;top:433.64px;line-height:16px;color:#1c1c1c;font-family:"Liberation Sans", sans-serif;font-size:12px;font-weight:400;font-style:normal;white-space:pre;letter-spacing:0.124px;'>Dialogue 58 - Computer</span><div class='a' style='left:12px;top:459px;width:9px;height:0;border-top:1px dotted #8a8a8a;'></div><svg style='left:22px;top:451px' width='12' height='17' viewBox='0 0 12 17'><path d='M.5 .5h9.500q1.500 0 1.500 1.500V16.500l-5-4.200-5 4.200V3.500q0-1.500-1.500-1.500z' fill='#a064a8'/><path d='M0 .5h1.500v2H0z' fill='#6f3f7a'/></svg><span style='position:absolute;left:43px;top:451.64px;line-height:16px;color:#1c1c1c;font-family:"Liberation Sans", sans-serif;font-size:12px;font-weight:400;font-style:normal;white-space:pre;letter-spacing:-0.059px;'>Dialogue 59 - Exercise</span><div class='a' style='left:12px;top:477px;width:9px;height:0;border-top:1px dotted #8a8a8a;'></div><svg style='left:22px;top:469px' width='12' height='17' viewBox='0 0 12 17'><path d='M.5 .5h9.500q1.500 0 1.500 1.500V16.500l-5-4.200-5 4.200V3.500q0-1.500-1.500-1.500z' fill='#a064a8'/><path d='M0 .5h1.500v2H0z' fill='#6f3f7a'/></svg><span style='position:absolute;left:43px;top:469.64px;line-height:16px;color:#1c1c1c;font-family:"Liberation Sans", sans-serif;font-size:12px;font-weight:400;font-style:normal;white-space:pre;letter-spacing:0.054px;'>Dialogue 60 - Goal/Ambition</span><div class='a' style='left:12px;top:495px;width:9px;height:0;border-top:1px dotted #8a8a8a;'></div><svg style='left:22px;top:487px' width='12' height='17' viewBox='0 0 12 17'><path d='M.5 .5h9.500q1.500 0 1.500 1.500V16.500l-5-4.200-5 4.200V3.500q0-1.500-1.500-1.500z' fill='#a064a8'/><path d='M0 .5h1.500v2H0z' fill='#6f3f7a'/></svg><span style='position:absolute;left:43px;top:487.64px;line-height:16px;color:#1c1c1c;font-family:"Liberation Sans", sans-serif;font-size:12px;font-weight:400;font-style:normal;white-space:pre;letter-spacing:0.226px;'>Dialogue 61 - Art</span><div class='a' style='left:12px;top:513px;width:9px;height:0;border-top:1px dotted #8a8a8a;'></div><svg style='left:22px;top:505px' width='12' height='17' viewBox='0 0 12 17'><path d='M.5 .5h9.500q1.500 0 1.500 1.500V16.500l-5-4.200-5 4.200V3.500q0-1.500-1.500-1.500z' fill='#a064a8'/><path d='M0 .5h1.500v2H0z' fill='#6f3f7a'/></svg><span style='position:absolute;left:43px;top:505.64px;line-height:16px;color:#1c1c1c;font-family:"Liberation Sans", sans-serif;font-size:12px;font-weight:400;font-style:normal;white-space:pre;letter-spacing:-0.120px;'>Dialogue 62 - Fashion</span><div class='a' style='left:12px;top:531px;width:9px;height:0;border-top:1px dotted #8a8a8a;'></div><svg style='left:22px;top:523px' width='12' height='17' viewBox='0 0 12 17'><path d='M.5 .5h9.500q1.500 0 1.500 1.500V16.500l-5-4.200-5 4.200V3.500q0-1.500-1.500-1.500z' fill='#a064a8'/><path d='M0 .5h1.500v2H0z' fill='#6f3f7a'/></svg><span style='position:absolute;left:43px;top:523.64px;line-height:16px;color:#1c1c1c;font-family:"Liberation Sans", sans-serif;font-size:12px;font-weight:400;font-style:normal;white-space:pre;letter-spacing:0.080px;'>Dialogue 63 - Jewelry</span><div class='a' style='left:12px;top:549px;width:9px;height:0;border-top:1px dotted #8a8a8a;'></div><svg style='left:22px;top:541px' width='12' height='17' viewBox='0 0 12 17'><path d='M.5 .5h9.500q1.500 0 1.500 1.500V16.500l-5-4.200-5 4.200V3.500q0-1.500-1.500-1.500z' fill='#a064a8'/><path d='M0 .5h1.500v2H0z' fill='#6f3f7a'/></svg><span style='position:absolute;left:43px;top:541.64px;line-height:16px;color:#1c1c1c;font-family:"Liberation Sans", sans-serif;font-size:12px;font-weight:400;font-style:normal;white-space:pre;letter-spacing:0.001px;'>Dialogue 64 - Cosmetic</span><div class='a' style='left:12px;top:567px;width:9px;height:0;border-top:1px dotted #8a8a8a;'></div><svg style='left:22px;top:559px' width='12' height='17' viewBox='0 0 12 17'><path d='M.5 .5h9.500q1.500 0 1.500 1.500V16.500l-5-4.200-5 4.200V3.500q0-1.500-1.500-1.500z' fill='#a064a8'/><path d='M0 .5h1.500v2H0z' fill='#6f3f7a'/></svg><span style='position:absolute;left:43px;top:559.64px;line-height:16px;color:#1c1c1c;font-family:"Liberation Sans", sans-serif;font-size:12px;font-weight:400;font-style:normal;white-space:pre;letter-spacing:0.081px;'>Dialogue 65 - Indoor Game</span><div class='a' style='left:12px;top:585px;width:9px;height:0;border-top:1px dotted #8a8a8a;'></div><svg style='left:22px;top:577px' width='12' height='17' viewBox='0 0 12 17'><path d='M.5 .5h9.500q1.500 0 1.500 1.500V16.500l-5-4.200-5 4.200V3.500q0-1.500-1.500-1.500z' fill='#a064a8'/><path d='M0 .5h1.500v2H0z' fill='#6f3f7a'/></svg><span style='position:absolute;left:43px;top:577.64px;line-height:16px;color:#1c1c1c;font-family:"Liberation Sans", sans-serif;font-size:12px;font-weight:400;font-style:normal;white-space:pre;letter-spacing:0.031px;'>Dialogue 66 - Phone Conversation</span><div class='a' style='left:12px;top:603px;width:9px;height:0;border-top:1px dotted #8a8a8a;'></div><svg style='left:22px;top:595px' width='12' height='17' viewBox='0 0 12 17'><path d='M.5 .5h9.500q1.500 0 1.500 1.500V16.500l-5-4.200-5 4.200V3.500q0-1.500-1.500-1.500z' fill='#a064a8'/><path d='M0 .5h1.500v2H0z' fill='#6f3f7a'/></svg><span style='position:absolute;left:43px;top:595.64px;line-height:16px;color:#1c1c1c;font-family:"Liberation Sans", sans-serif;font-size:12px;font-weight:400;font-style:normal;white-space:pre;letter-spacing:.17px;'>Dialogue 67 - Learning A Second Language</span><div class='a' style='left:12px;top:621px;width:9px;height:0;border-top:1px dotted #8a8a8a;'></div><svg style='left:22px;top:613px' width='12' height='17' viewBox='0 0 12 17'><path d='M.5 .5h9.500q1.500 0 1.500 1.500V16.500l-5-4.200-5 4.200V3.500q0-1.500-1.500-1.500z' fill='#a064a8'/><path d='M0 .5h1.500v2H0z' fill='#6f3f7a'/></svg><span style='position:absolute;left:43px;top:613.64px;line-height:16px;color:#1c1c1c;font-family:"Liberation Sans", sans-serif;font-size:12px;font-weight:400;font-style:normal;white-space:pre;letter-spacing:0.054px;'>Dialogue 68 - A Creative Person</span><div class='a' style='left:12px;top:639px;width:9px;height:0;border-top:1px dotted #8a8a8a;'></div><svg style='left:22px;top:631px' width='12' height='17' viewBox='0 0 12 17'><path d='M.5 .5h9.500q1.500 0 1.500 1.500V16.500l-5-4.200-5 4.200V3.500q0-1.500-1.500-1.500z' fill='#a064a8'/><path d='M0 .5h1.500v2H0z' fill='#6f3f7a'/></svg><span style='position:absolute;left:43px;top:631.64px;line-height:16px;color:#1c1c1c;font-family:"Liberation Sans", sans-serif;font-size:12px;font-weight:400;font-style:normal;white-space:pre;letter-spacing:0.109px;'>Dialogue 69 - A Celebrity</span><div class='a' style='left:12px;top:657px;width:9px;height:0;border-top:1px dotted #8a8a8a;'></div><svg style='left:22px;top:649px' width='12' height='17' viewBox='0 0 12 17'><path d='M.5 .5h9.500q1.500 0 1.500 1.500V16.500l-5-4.200-5 4.200V3.500q0-1.500-1.500-1.500z' fill='#a064a8'/><path d='M0 .5h1.500v2H0z' fill='#6f3f7a'/></svg><span style='position:absolute;left:43px;top:649.64px;line-height:16px;color:#1c1c1c;font-family:"Liberation Sans", sans-serif;font-size:12px;font-weight:400;font-style:normal;white-space:pre;letter-spacing:0.133px;'>Dialogue 70 - A Health Problem</span><div class='a' style='left:12px;top:675px;width:9px;height:0;border-top:1px dotted #8a8a8a;'></div><svg style='left:22px;top:667px' width='12' height='17' viewBox='0 0 12 17'><path d='M.5 .5h9.500q1.500 0 1.500 1.500V16.500l-5-4.200-5 4.200V3.500q0-1.500-1.500-1.500z' fill='#a064a8'/><path d='M0 .5h1.500v2H0z' fill='#6f3f7a'/></svg><span style='position:absolute;left:43px;top:667.64px;line-height:16px;color:#1c1c1c;font-family:"Liberation Sans", sans-serif;font-size:12px;font-weight:400;font-style:normal;white-space:pre;letter-spacing:.17px;'>Dialogue 71 - Technological Advancement</span><div class='a' style='left:12px;top:693px;width:9px;height:0;border-top:1px dotted #8a8a8a;'></div><svg style='left:22px;top:685px' width='12' height='17' viewBox='0 0 12 17'><path d='M.5 .5h9.500q1.500 0 1.500 1.500V16.500l-5-4.200-5 4.200V3.500q0-1.500-1.500-1.500z' fill='#a064a8'/><path d='M0 .5h1.500v2H0z' fill='#6f3f7a'/></svg><span style='position:absolute;left:43px;top:685.64px;line-height:16px;color:#1c1c1c;font-family:"Liberation Sans", sans-serif;font-size:12px;font-weight:400;font-style:normal;white-space:pre;letter-spacing:0.092px;'>Dialogue 72 - A Landmark</span><div class='a' style='left:12px;top:711px;width:9px;height:0;border-top:1px dotted #8a8a8a;'></div><svg style='left:22px;top:703px' width='12' height='17' viewBox='0 0 12 17'><path d='M.5 .5h9.500q1.500 0 1.500 1.500V16.500l-5-4.200-5 4.200V3.500q0-1.500-1.500-1.500z' fill='#a064a8'/><path d='M0 .5h1.500v2H0z' fill='#6f3f7a'/></svg><span style='position:absolute;left:43px;top:703.64px;line-height:16px;color:#1c1c1c;font-family:"Liberation Sans", sans-serif;font-size:12px;font-weight:400;font-style:normal;white-space:pre;letter-spacing:0.164px;'>Dialogue 73 - Handcraft Items</span><div class='a' style='left:12px;top:729px;width:9px;height:0;border-top:1px dotted #8a8a8a;'></div><svg style='left:22px;top:721px' width='12' height='17' viewBox='0 0 12 17'><path d='M.5 .5h9.500q1.500 0 1.500 1.500V16.500l-5-4.200-5 4.200V3.500q0-1.500-1.500-1.500z' fill='#a064a8'/><path d='M0 .5h1.500v2H0z' fill='#6f3f7a'/></svg><span style='position:absolute;left:43px;top:721.64px;line-height:16px;color:#1c1c1c;font-family:"Liberation Sans", sans-serif;font-size:12px;font-weight:400;font-style:normal;white-space:pre;letter-spacing:-0.015px;'>Dialogue 74 - Plastic Surgery</span><div class='a' style='left:12px;top:747px;width:9px;height:0;border-top:1px dotted #8a8a8a;'></div><svg style='left:22px;top:739px' width='12' height='17' viewBox='0 0 12 17'><path d='M.5 .5h9.500q1.500 0 1.500 1.500V16.500l-5-4.200-5 4.200V3.500q0-1.500-1.500-1.500z' fill='#a064a8'/><path d='M0 .5h1.500v2H0z' fill='#6f3f7a'/></svg><span style='position:absolute;left:43px;top:739.64px;line-height:16px;color:#1c1c1c;font-family:"Liberation Sans", sans-serif;font-size:12px;font-weight:400;font-style:normal;white-space:pre;letter-spacing:-0.039px;'>Dialogue 75 - Success</span></div><div class='a' style='left:268px;top:228px;width:16px;height:764px;background:#e4e4e4;'></div><div class='a' style='left:269px;top:579px;width:14px;height:397px;background:#c4c4c4;'></div><svg style='left:271px;top:234px' width='10' height='7' viewBox='0 0 10 7'><path d='M1 6l4-4 4 4' fill='none' stroke='#666' stroke-width='1.600'/></svg><svg style='left:271px;top:982px' width='10' height='7' viewBox='0 0 10 7'><path d='M1 1l4 4 4-4' fill='none' stroke='#666' stroke-width='1.600'/></svg><div class='a' style='left:33px;top:992px;width:235px;height:8px;background:#e4e4e4;'></div><div class='a' style='left:50px;top:995px;width:167px;height:5px;background:#c4c4c4;'></div><svg style='left:38px;top:996px' width='6' height='8' viewBox='0 0 6 8'><path d='M5 0L1 4l4 4' fill='none' stroke='#666' stroke-width='1.500'/></svg><svg style='left:255px;top:996px' width='6' height='8' viewBox='0 0 6 8'><path d='M1 0l4 4-4 4' fill='none' stroke='#666' stroke-width='1.500'/></svg><div class='a' style='left:288px;top:534px;width:3px;height:44px;background-image:radial-gradient(#8e8e8e 0.6px,transparent 0.9px);background-size:2px 2px;'></div><svg style='left:9px;top:230px' width='19' height='21' viewBox='0 0 19 21'><path d='M1 1h11l6 6V20H1z' fill='#f6f6f6' stroke='#555' stroke-width='1.200'/><path d='M12 1v6h6' fill='none' stroke='#555' stroke-width='1.200'/><path d='M1 0h5v11l-2.500-2.200L1 11z' fill='#9a63ab'/></svg><svg style='left:8px;top:275px' width='21' height='23' viewBox='0 0 21 23'><rect x='1' y='1' width='13' height='16' fill='#f2f2f2' stroke='#4b74b8' stroke-width='1.100'/><rect x='3' y='3' width='13' height='16' fill='#f2f2f2' stroke='#4b74b8' stroke-width='1.100'/><rect x='6' y='5.500' width='13' height='16' fill='#f6f6f6' stroke='#4b74b8' stroke-width='1.200'/></svg><svg style='left:6px;top:320px' width='24' height='22' viewBox='0 0 24 22'><path d='M7 1h16l-6 6H1z' fill='#f6f6f6' stroke='#4b74b8' stroke-width='1.100'/><path d='M7 7.500h16l-6 6H1z' fill='#3f6fb5' stroke='#3f6fb5' stroke-width='1.100'/><path d='M7 14h16l-6 6H1z' fill='#f6f6f6' stroke='#4b74b8' stroke-width='1.100'/></svg><svg style='left:7px;top:366px' width='22' height='21' viewBox='0 0 22 21'><path d='M8 8h13v9h-2v3.500L15.500 17H8z' fill='#777'/><path d='M0 0h16v11H6l-3.500 3.500V11H0z' fill='#e9a94d'/><path d='M3 3h10M3 5.500h10M3 8h10' stroke='#fbe9cf' stroke-width='1.100'/></svg><svg style='left:8px;top:409px' width='21' height='24' viewBox='0 0 21 24'><path d='M17.500 8.500l-9 9.500a3.400 3.400 0 0 1-5-4.800L12.500 3.500a4.600 4.600 0 0 1 6.800 6.300L9.500 20' fill='none' stroke='#4b74b8' stroke-width='1.800' stroke-linecap='round' transform='translate(0,1)'/></svg><svg style='left:7px;top:455px' width='23' height='23' viewBox='0 0 23 23'><rect x='.6' y='.6' width='16' height='20' fill='#f6f6f6' stroke='#666' stroke-width='1.100'/><path d='M5 8a3.500 3.500 0 1 1 5 3M7 6.500a2 2 0 1 1 2 3' fill='none' stroke='#7a4a8a' stroke-width='1'/><path d='M3 14h10M3 16.500h7' stroke='#aaa' stroke-width='.9'/><circle cx='17.500' cy='17.500' r='4.800' fill='#3f7fc4'/><path d='M15.500 19.500l4-4' stroke='#fff' stroke-width='1.500'/></svg><svg style='left:9px;top:500px' width='19' height='22' viewBox='0 0 19 22'><path d='M4.500 9V6.500a5 5 0 0 1 10 0V9' fill='none' stroke='#eac27a' stroke-width='2.200'/><rect x='0' y='9' width='19' height='13' rx='1.500' fill='#e8b664'/><circle cx='9.500' cy='14' r='2' fill='#fbf1de'/><rect x='8.600' y='14.500' width='1.800' height='4' fill='#fbf1de'/></svg><svg style='left:8px;top:546px' width='21' height='22' viewBox='0 0 21 22'><path d='M16 0l3 2.500L7 16l-5 3 2-5.500z' fill='#3f6fb5'/><path d='M12 0l2 1.500L4 12' stroke='#3f6fb5' stroke-width='1.500' fill='none'/><circle cx='15.500' cy='15.500' r='3.300' fill='#e9a94d' stroke='#9a63ab' stroke-width='1.500'/><path d='M13 18l-1.500 4 2.500-1.200M18 18l1.500 4-2.500-1.200' stroke='#9a63ab' stroke-width='1.500' fill='none'/></svg><div class='a' style='left:286px;top:177px;width:1617px;height:823px;background:#a2a2a2;'></div><div class='a' style='left:485px;top:177px;width:1px;height:823px;background:#6f6f6f;'></div><div class='a' style='left:486px;top:177px;width:1224px;height:823px;background:#ebebeb;'></div><div class='a' style='left:1710px;top:177px;width:1px;height:823px;background:#646464;'></div><div class='a' style='left:1903px;top:177px;width:17px;height:823px;background:#e3e3e3;'></div><div class='a' style='left:1903px;top:177px;width:17px;height:9px;background:#ececec;border:1px solid #9a9a9a;box-sizing:border-box;'></div><svg style='left:1907px;top:192px' width='9' height='6' viewBox='0 0 9 6'><path d='M1 5l3.500-3.500L8 5' fill='none' stroke='#555' stroke-width='1.400'/></svg><div class='a' style='left:1904px;top:900px;width:15px;height:16.5px;background:#c6c6c6;'></div><span style='position:absolute;left:682.5px;top:220.80px;line-height:62px;color:#3e3e3e;font-family:"Liberation Serif", serif;font-size:48px;font-weight:700;font-style:italic;white-space:pre;-webkit-text-stroke:2.2px #3e3e3e;text-shadow:1.1px 0 0 #3e3e3e,-1.1px 0 0 #3e3e3e,3px 2.6px 0 #a5b4c3,1.8px 2.6px 0 #a5b4c3;paint-order:stroke fill;transform-origin:0 50%;transform:scaleX(1.3064);'>Dialogue 68 - A Creative Person</span><svg style='left:0;top:0' width='1920' height='1000' viewBox='0 0 1920 1000'><g fill='#707070' stroke='none'><path transform='translate(873,301.5) rotate(-90) scale(13.4,11)' d='M0 1C-.1 .9 -1 .35 -1 -.25C-1 -.7 -.65 -.95 -.42 -.95C-.2 -.95 -.05 -.8 0 -.62C.05 -.8 .2 -.95 .42 -.95C.65 -.95 1 -.7 1 -.25C1 .35 .1 .9 0 1z'/><path transform='translate(899.5,301.5) rotate(-90) scale(10.8,10)' d='M0 1C-.1 .9 -1 .35 -1 -.25C-1 -.7 -.65 -.95 -.42 -.95C-.2 -.95 -.05 -.8 0 -.62C.05 -.8 .2 -.95 .42 -.95C.65 -.95 1 -.7 1 -.25C1 .35 .1 .9 0 1z'/><path transform='translate(921.3,301.5) rotate(-90) scale(9,7.8)' d='M0 1C-.1 .9 -1 .35 -1 -.25C-1 -.7 -.65 -.95 -.42 -.95C-.2 -.95 -.05 -.8 0 -.62C.05 -.8 .2 -.95 .42 -.95C.65 -.95 1 -.7 1 -.25C1 .35 .1 .9 0 1z'/><rect x='880' y='300.300' width='180' height='2.400'/><path d='M1054 295.500L1081 301.500L1054 307.500z'/><circle cx='1097' cy='301.500' r='6'/></g><g transform='translate(2194,0) scale(-1,1)' fill='#707070' stroke='none'><path transform='translate(873,301.5) rotate(-90) scale(13.4,11)' d='M0 1C-.1 .9 -1 .35 -1 -.25C-1 -.7 -.65 -.95 -.42 -.95C-.2 -.95 -.05 -.8 0 -.62C.05 -.8 .2 -.95 .42 -.95C.65 -.95 1 -.7 1 -.25C1 .35 .1 .9 0 1z'/><path transform='translate(899.5,301.5) rotate(-90) scale(10.8,10)' d='M0 1C-.1 .9 -1 .35 -1 -.25C-1 -.7 -.65 -.95 -.42 -.95C-.2 -.95 -.05 -.8 0 -.62C.05 -.8 .2 -.95 .42 -.95C.65 -.95 1 -.7 1 -.25C1 .35 .1 .9 0 1z'/><path transform='translate(921.3,301.5) rotate(-90) scale(9,7.8)' d='M0 1C-.1 .9 -1 .35 -1 -.25C-1 -.7 -.65 -.95 -.42 -.95C-.2 -.95 -.05 -.8 0 -.62C.05 -.8 .2 -.95 .42 -.95C.65 -.95 1 -.7 1 -.25C1 .35 .1 .9 0 1z'/><rect x='880' y='300.300' width='180' height='2.400'/><path d='M1054 295.500L1081 301.500L1054 307.500z'/><circle cx='1097' cy='301.500' r='6'/></g></svg><svg style='left:0;top:0' width='1920' height='1000' viewBox='0 0 1920 1000'><circle cx='562' cy='377.4' r='18' fill='#1cb6c6'/><path d='M557.5 370.9L568.5 377.4L557.5 383.9z' fill='#f2fbfc' stroke='#f2fbfc' stroke-width='1.500' stroke-linejoin='round'/><g transform='translate(617.3,377.0)'><clipPath id='c6173_3770'><circle r='20.600'/></clipPath><circle r='20.600' fill='#eca533'/><g clip-path='url(#c6173_3770)'>
<path d='M-8 -4C-8 -12.500 -4 -15.500 0.500 -15.500C6 -15.500 8.300 -11 8.300 -4L9 10H-8.500z' fill='#2b2828'/>
<path d='M-12.500 21C-12.500 13 -9 8.500 -3.500 7L4 7C9.500 8.500 13 13 13 21z' fill='#444045'/>
<path d='M-2.800 2h5.800L2.800 13L0.800 21H-0.800L-2.400 13z' fill='#f1c2aa'/>
<path d='M-6 -4.500C-6 1 -3 3.500 0.500 3.500C4 3.500 6.800 1 6.800 -4.500C6.800 -7 5 -8.500 0.500 -8.500C-4 -8.500 -6 -7 -6 -4.500z' fill='#f5cdb8'/>
<path d='M-7 -3C-5 -11 2 -11.500 7.500 -5C4 -7.500 0 -8 -3 -7.500C-4.500 -6.500 -6 -5 -7 -3z' fill='#2b2828'/>
</g></g><circle cx='562' cy='465.4' r='18' fill='#1cb6c6'/><path d='M557.5 458.9L568.5 465.4L557.5 471.9z' fill='#f2fbfc' stroke='#f2fbfc' stroke-width='1.500' stroke-linejoin='round'/><g transform='translate(616.6,465.79999999999995)'><clipPath id='c6166_4658'><circle r='20'/></clipPath><circle r='20' fill='#eca533'/><g clip-path='url(#c6166_4658)'>
<path d='M-15 21C-15 13 -10 9.500 -4.500 8L4.500 8C10 9.500 15 13 15 21z' fill='#85858a'/>
<path d='M-4.500 8L-9 12L-3 21H3L9 12L4.500 8z' fill='#6c6c72'/>
<path d='M-3.800 7L0 12.500L3.800 7L2.600 21H-2.600z' fill='#f3f3f3'/>
<path d='M-1.200 10.500h2.400L2 21H-2z' fill='#2a9ac2'/>
<path d='M-3 2h6v5.500L0 10.500L-3 7.500z' fill='#e9b79c'/>
<ellipse cx='0' cy='-3.200' rx='6.600' ry='8.400' fill='#f6d3c0'/>
<path d='M-6.900 -3.500C-8.500 -11 -4 -14.500 0.500 -14.500C6 -14.500 8.500 -10.500 6.900 -3.500C6.300 -7 4.500 -9.200 0 -9.200C-4.500 -9.200 -6.300 -7 -6.900 -3.500z' fill='#7a3f1f'/>
</g></g><circle cx='562' cy='609.4' r='18' fill='#1cb6c6'/><path d='M557.5 602.9L568.5 609.4L557.5 615.9z' fill='#f2fbfc' stroke='#f2fbfc' stroke-width='1.500' stroke-linejoin='round'/><g transform='translate(617.3,609.0)'><clipPath id='c6173_6090'><circle r='20.600'/></clipPath><circle r='20.600' fill='#eca533'/><g clip-path='url(#c6173_6090)'>
<path d='M-8 -4C-8 -12.500 -4 -15.500 0.500 -15.500C6 -15.500 8.300 -11 8.300 -4L9 10H-8.500z' fill='#2b2828'/>
<path d='M-12.500 21C-12.500 13 -9 8.500 -3.500 7L4 7C9.500 8.500 13 13 13 21z' fill='#444045'/>
<path d='M-2.800 2h5.800L2.800 13L0.800 21H-0.800L-2.400 13z' fill='#f1c2aa'/>
<path d='M-6 -4.500C-6 1 -3 3.500 0.500 3.500C4 3.500 6.800 1 6.800 -4.500C6.800 -7 5 -8.500 0.500 -8.500C-4 -8.500 -6 -7 -6 -4.500z' fill='#f5cdb8'/>
<path d='M-7 -3C-5 -11 2 -11.500 7.500 -5C4 -7.500 0 -8 -3 -7.500C-4.500 -6.500 -6 -5 -7 -3z' fill='#2b2828'/>
</g></g><circle cx='562' cy='697.4' r='18' fill='#1cb6c6'/><path d='M557.5 690.9L568.5 697.4L557.5 703.9z' fill='#f2fbfc' stroke='#f2fbfc' stroke-width='1.500' stroke-linejoin='round'/><g transform='translate(616.6,697.8)'><clipPath id='c6166_6978'><circle r='20'/></clipPath><circle r='20' fill='#eca533'/><g clip-path='url(#c6166_6978)'>
<path d='M-15 21C-15 13 -10 9.500 -4.500 8L4.500 8C10 9.500 15 13 15 21z' fill='#85858a'/>
<path d='M-4.500 8L-9 12L-3 21H3L9 12L4.500 8z' fill='#6c6c72'/>
<path d='M-3.800 7L0 12.500L3.800 7L2.600 21H-2.600z' fill='#f3f3f3'/>
<path d='M-1.200 10.500h2.400L2 21H-2z' fill='#2a9ac2'/>
<path d='M-3 2h6v5.500L0 10.500L-3 7.500z' fill='#e9b79c'/>
<ellipse cx='0' cy='-3.200' rx='6.600' ry='8.400' fill='#f6d3c0'/>
<path d='M-6.900 -3.500C-8.500 -11 -4 -14.500 0.500 -14.500C6 -14.500 8.500 -10.500 6.900 -3.500C6.300 -7 4.500 -9.200 0 -9.200C-4.500 -9.200 -6.300 -7 -6.900 -3.500z' fill='#7a3f1f'/>
</g></g><circle cx='562' cy='951.4' r='18' fill='#1cb6c6'/><path d='M557.5 944.9L568.5 951.4L557.5 957.9z' fill='#f2fbfc' stroke='#f2fbfc' stroke-width='1.500' stroke-linejoin='round'/><g transform='translate(617.3,951.0)'><clipPath id='c6173_9510'><circle r='20.600'/></clipPath><circle r='20.600' fill='#eca533'/><g clip-path='url(#c6173_9510)'>
<path d='M-8 -4C-8 -12.500 -4 -15.500 0.500 -15.500C6 -15.500 8.300 -11 8.300 -4L9 10H-8.500z' fill='#2b2828'/>
<path d='M-12.500 21C-12.500 13 -9 8.500 -3.500 7L4 7C9.500 8.500 13 13 13 21z' fill='#444045'/>
<path d='M-2.800 2h5.800L2.800 13L0.800 21H-0.800L-2.400 13z' fill='#f1c2aa'/>
<path d='M-6 -4.500C-6 1 -3 3.500 0.500 3.500C4 3.500 6.800 1 6.800 -4.500C6.800 -7 5 -8.500 0.500 -8.500C-4 -8.500 -6 -7 -6 -4.500z' fill='#f5cdb8'/>
<path d='M-7 -3C-5 -11 2 -11.500 7.500 -5C4 -7.500 0 -8 -3 -7.500C-4.500 -6.500 -6 -5 -7 -3z' fill='#2b2828'/>
</g></g></svg><span style='position:absolute;left:654.5px;top:353.98px;line-height:47px;color:#454545;font-family:"Liberation Serif", serif;font-size:36.5px;font-weight:400;font-style:normal;white-space:pre;text-shadow:2.5px 3.5px 5px rgba(0,0,0,.19);-webkit-text-stroke:.2px #454545;word-spacing:-3px;transform-origin:0 50%;transform:scaleX(1.1508);'>Who is the creative person that you admire?</span><span style='position:absolute;left:654.5px;top:441.98px;line-height:47px;color:#454545;font-family:"Liberation Serif", serif;font-size:36.5px;font-weight:400;font-style:normal;white-space:pre;text-shadow:2.5px 3.5px 5px rgba(0,0,0,.19);-webkit-text-stroke:.2px #454545;word-spacing:-3px;transform-origin:0 50%;transform:scaleX(1.1236);'>Well, I really admire Mr. Tom, who is an</span><span style='position:absolute;left:654.5px;top:497.98px;line-height:47px;color:#454545;font-family:"Liberation Serif", serif;font-size:36.5px;font-weight:400;font-style:normal;white-space:pre;text-shadow:2.5px 3.5px 5px rgba(0,0,0,.19);-webkit-text-stroke:.2px #454545;word-spacing:-3px;transform-origin:0 50%;transform:scaleX(1.1368);'>extremely creative Math teacher.</span><span style='position:absolute;left:654.5px;top:585.98px;line-height:47px;color:#454545;font-family:"Liberation Serif", serif;font-size:36.5px;font-weight:400;font-style:normal;white-space:pre;text-shadow:2.5px 3.5px 5px rgba(0,0,0,.19);-webkit-text-stroke:.2px #454545;word-spacing:-3px;transform-origin:0 50%;transform:scaleX(1.1315);'>Why do you admire him?</span><span style='position:absolute;left:654.5px;top:672.98px;line-height:47px;color:#454545;font-family:"Liberation Serif", serif;font-size:36.5px;font-weight:400;font-style:normal;white-space:pre;text-shadow:2.5px 3.5px 5px rgba(0,0,0,.19);-webkit-text-stroke:.2px #454545;word-spacing:-3px;transform-origin:0 50%;transform:scaleX(1.1370);'>For me, Math is quite boring because I have to work with long</span><span style='position:absolute;left:654.5px;top:728.98px;line-height:47px;color:#454545;font-family:"Liberation Serif", serif;font-size:36.5px;font-weight:400;font-style:normal;white-space:pre;text-shadow:2.5px 3.5px 5px rgba(0,0,0,.19);-webkit-text-stroke:.2px #454545;word-spacing:-3px;transform-origin:0 50%;transform:scaleX(1.1527);'>numbers. I used to hate Math so much before I had lessons</span><span style='position:absolute;left:654.5px;top:784.98px;line-height:47px;color:#454545;font-family:"Liberation Serif", serif;font-size:36.5px;font-weight:400;font-style:normal;white-space:pre;text-shadow:2.5px 3.5px 5px rgba(0,0,0,.19);-webkit-text-stroke:.2px #454545;word-spacing:-3px;transform-origin:0 50%;transform:scaleX(1.1446);'>with Mr.Tom. He has thousands of ways to teach that boring</span><span style='position:absolute;left:654.5px;top:840.98px;line-height:47px;color:#454545;font-family:"Liberation Serif", serif;font-size:36.5px;font-weight:400;font-style:normal;white-space:pre;text-shadow:2.5px 3.5px 5px rgba(0,0,0,.19);-webkit-text-stroke:.2px #454545;word-spacing:-3px;transform-origin:0 50%;transform:scaleX(1.1390);'>subject, which inspires me a lot.</span><span style='position:absolute;left:654.5px;top:927.98px;line-height:47px;color:#454545;font-family:"Liberation Serif", serif;font-size:36.5px;font-weight:400;font-style:normal;white-space:pre;text-shadow:2.5px 3.5px 5px rgba(0,0,0,.19);-webkit-text-stroke:.2px #454545;word-spacing:-3px;transform-origin:0 50%;transform:scaleX(1.1285);'>How did he become so creative?</span><div class='a' style='left:538px;top:442.500px;width:47px;height:45px;border:1px dotted #222;box-sizing:border-box;'></div><div class='a' style='left:541px;top:446px;width:41px;height:38px;border:1px dotted #333;box-sizing:border-box;'></div><svg style='left:560px;top:468px' width='19' height='25' viewBox='0 0 19 25'><path d='M5.500 15L5.500 3Q5.500 1.300 7 1.300Q8.500 1.300 8.500 3L8.500 9.500Q10 8.300 11.500 9.800Q13 8.800 14.500 10.500Q16.200 9.800 17.500 11.500L17.500 17Q17.500 21 15.500 23.500L8 23.500Q5 20 1.500 15.500Q.5 13.500 2.300 12.800Q4 12.500 5.500 15Z' fill='#fff' stroke='#111' stroke-width='1.150' stroke-linejoin='round'/><path d='M8.500 9.500V13M11.500 10V13.500M14.500 10.800V13.800' stroke='#111' stroke-width='.9'/></svg><svg style='left:0;top:0' width='1920' height='1000' viewBox='0 0 1920 1000'>
<defs><filter id='ib' x='-5%' y='-5%' width='110%' height='110%'><feGaussianBlur stdDeviation='0.45'/></filter></defs>
<g filter='url(#ib)'>
<!-- pink blob -->
<path d='M1348 614 C1340 600 1340 585 1346 575 C1351 568 1358 565 1365 563 C1358 556 1350 548 1346 538 C1336 505 1342 460 1368 428 C1392 402 1425 397 1450 398 C1500 398 1545 420 1578 458 C1604 492 1616 530 1611 560 C1607 585 1596 603 1580 614 z' fill='#dbc5d5'/>
<!-- floor -->
<path d='M1338 670V618q0-4 4-4h269q4 0 4 4v52z' fill='#9cc2ea'/>
<g fill='#8bb3de'>
<rect x='1356' y='626.500' width='21' height='6'/><rect x='1364' y='652' width='21' height='6'/><rect x='1462' y='633' width='22' height='6'/><rect x='1474' y='650' width='22' height='6'/><rect x='1555' y='623' width='21' height='6'/><rect x='1534' y='651' width='22' height='6'/>
</g>
<g fill='#b2cff1'>
<rect x='1368' y='633' width='21' height='6'/><rect x='1422' y='658' width='21' height='6'/><rect x='1447' y='626' width='21' height='6'/><rect x='1486' y='657' width='22' height='6'/><rect x='1541' y='629.500' width='21' height='6'/><rect x='1579' y='658' width='21' height='6'/>
</g>
<ellipse cx='1417' cy='648' rx='30' ry='4' fill='#8bb3de'/>
<!-- blackboard -->
<rect x='1447' y='447' width='114' height='104' rx='5' fill='#c99b5b'/>
<rect x='1452.500' y='452.500' width='103' height='93' rx='2.500' fill='#3b4143'/>
<g stroke='#e9ecec' stroke-width='1.800' fill='none' stroke-linejoin='miter'>
<path d='M1472 462 L1472 497.500 L1543 497.500 z'/>
<path d='M1472 491.500h6v6'/>
<path d='M1486.500 469.500 L1477.500 487' stroke-width='1.600'/>
<path d='M1480.500 466 L1478 471 L1483.500 474' stroke-width='1.400'/>
<path d='M1526.500 490 L1524.500 497 M1531 492 L1529 497' stroke-width='1.300'/>
</g>
<g fill='#e9ecec' font-family='Liberation Sans, sans-serif'>
<text x='1462' y='480' font-size='8'>a</text><text x='1506.500' y='476' font-size='8'>c</text><text x='1498.500' y='494' font-size='8.500'>b</text>
<text x='1469.500' y='523.500' font-size='15' textLength='68' lengthAdjust='spacingAndGlyphs'>a<tspan dy='-5' font-size='9.500'>2</tspan><tspan dy='5'>+b</tspan><tspan dy='-5' font-size='9.500'>2</tspan><tspan dy='5'>=c</tspan><tspan dy='-5' font-size='9.500'>2</tspan></text>
</g>
<rect x='1491.500' y='541' width='22.500' height='5' rx='2.500' fill='#e4e7e8'/>
<rect x='1518.500' y='539' width='28.500' height='6.500' fill='#f0b429'/>
<path d='M1518.500 539v-4.500h7q7-5.500 14 0h7.500v4.500z' fill='#4d525e'/>
<!-- table -->
<rect x='1510' y='592' width='4' height='56' fill='#ead0a0'/><rect x='1582' y='592' width='4' height='56' fill='#ead0a0'/>
<rect x='1498' y='592' width='4' height='56' fill='#d3a55f'/><rect x='1570' y='592' width='4' height='56' fill='#d3a55f'/>
<rect x='1492' y='582.500' width='100' height='5' fill='#ead0a0'/><rect x='1492' y='587' width='100' height='5.500' fill='#d3a55f'/>
<!-- books -->
<path d='M1555.500 554.500h28a4.500 4.500 0 0 1 0 9h-28z' fill='#e8ebe8' stroke='#5fa086' stroke-width='2'/>
<rect x='1553' y='564' width='33' height='8.300' rx='1' fill='#e02a33'/>
<path d='M1588 573.300h-28a4.300 4.300 0 0 0 0 8.600h28z' fill='#e4e8ec' stroke='#4a7fc0' stroke-width='2'/>
<!-- pen + stapler -->
<rect x='1499' y='578' width='21' height='2.600' fill='#9fbbe6'/>
<path d='M1516 576 q4-4 9-1.500 l3 2.500h7v5h-12l-3-4z' fill='#3b3f4a'/><rect x='1520' y='578.500' width='7' height='3.500' fill='#dfe3ea'/>
<!-- man: legs -->
<path d='M1397 586h40.500l0.500 48h-18l-3-32l-3 32h-18z' fill='#2c2f3a'/>
<path d='M1392 649.500q-1-9 6-15h12.500q1 8 0.500 13q-9 4-19 2z' fill='#d78f4f'/><path d='M1392.500 646q0-8 6-12h12q1 6 0 10q-9 4-18 2z' fill='#a4612c'/>
<path d='M1442.500 649.500q1-9-6-15h-12.500q-1 8-.5 13q9 4 19 2z' fill='#d78f4f'/><path d='M1442 646q0-8-6-12h-12q-1 6 0 10q9 4 18 2z' fill='#a4612c'/>
<!-- left arm loop -->
<path d='M1392 542 C1380 548 1372 558 1372.500 568 C1373 578 1384 583 1398 584 L1402 570 L1392 566 Z' fill='#a4612c'/>
<path d='M1385 548 C1376 555 1371 564 1373 571 C1375 578 1384 582 1392 583 C1382 575 1378 562 1385 548z' fill='#824519'/>
<!-- jacket body -->
<path d='M1391 543 L1403 537 H1431 L1442 544 L1440 598 H1424 L1416.800 590 L1409.500 598 H1394 Z' fill='#a4612c'/>
<path d='M1430 575q6 3 9 0v-8z' fill='#824519' opacity='.6'/>
<path d='M1385.500 566l5.500-5.500l2 9z' fill='#dbc5d5'/>
<!-- shirt -->
<path d='M1401.500 537.500H1432L1416.800 574.500z' fill='#5b9be0'/>
<path d='M1407.500 530h19.500l-10.200 18z' fill='#f2a968'/>
<circle cx='1417.800' cy='555.700' r='1.400' fill='#c4dbf6'/><circle cx='1417.800' cy='564' r='1.400' fill='#c4dbf6'/>
<circle cx='1419.500' cy='582' r='1.600' fill='#5a3218'/>
<!-- thumb hand -->
<path d='M1397 570q0-3 3-3h2l0.500-4q0.500-2.500 2.500-2.500q2 .3 2 3l-.5 4h4q3.500 0 3.500 3.500l-1 10q-.5 2.500-3 2.500h-10q-3 0-3-3z' fill='#f2a968'/>
<!-- right hand -->
<path d='M1471 561q8-3 11.500 3q2.500 6-1 10.500q-4 3-10 1z' fill='#f2a968'/><path d='M1481 565q4 5 0 11l-4 3q5-6 4-14z' fill='#a4612c'/>
<!-- book -->
<g transform='rotate(14 1448 533)'>
<rect x='1448' y='533' width='36' height='51' rx='2' fill='#c69c60'/>
<path d='M1448 535q0-2 2-2h32q2 0 2 2v5.500h-36z' fill='#f1e2c4'/><rect x='1448' y='539.500' width='36' height='2' fill='#dcbf8c'/>
<text x='1453' y='561.500' font-size='12.500' font-family='Liberation Sans, sans-serif' fill='#5a3218' textLength='26' lengthAdjust='spacingAndGlyphs'>2+2</text>
<text x='1453.500' y='573' font-size='7.500' font-family='Liberation Sans, sans-serif' fill='#f6ecd8' textLength='25' lengthAdjust='spacingAndGlyphs'>MATH</text>
</g>
<!-- head -->
<ellipse cx='1375.500' cy='507' rx='5' ry='7' fill='#f2a968'/><ellipse cx='1376.500' cy='508' rx='2.200' ry='4' fill='#e0925a'/>
<path d='M1377 470 C1374 490 1375 512 1385 526 C1393 537 1405 541 1414 541 C1428 541 1440 532 1445 518 C1449 505 1449 480 1447 462 Z' fill='#f2a968'/>
<!-- hair -->
<path d='M1367 479 C1364 455 1378 440 1398 437.500 C1415 435.500 1430 441 1440 440 C1446 439.500 1449 437 1449.500 437 C1451 446 1449 455 1445 461 C1430 470 1405 472 1385.500 472 L1381 490 L1377 498 C1371 494 1368 488 1367 479 Z' fill='#4b2a1f'/>
<path d='M1379 468 C1376 452 1386 441 1400 439 C1416 437 1430 442 1440 441 C1445 440.500 1448 438.500 1449 438 C1450 446 1448 453 1444 458 C1430 466 1405 468 1379 468 Z' fill='#6b3a28'/>
<!-- brows -->
<path d='M1398 482.500l7-2.800v3.800z' fill='#4b2a1f'/><path d='M1428 478.500l8-.5l3 2.500z' fill='#4b2a1f'/>
<!-- glasses -->
<g fill='none' stroke='#3a3e55' stroke-width='2.900' stroke-linejoin='round'>
<path d='M1381.500 489.500 L1413 486 L1411.500 501.500 L1387.500 504.500 Z' fill='#f6c9a0' fill-opacity='.45'/>
<path d='M1422.500 485 L1448 482.500 L1447 497 L1426.500 499 Z' fill='#f6c9a0' fill-opacity='.45'/>
<path d='M1413 487.500 L1422.500 486.500' />
<path d='M1382 490 L1378 488' /><path d='M1447 483 L1452 481.500' stroke-width='1.600'/>
</g>
<circle cx='1399' cy='495' r='3.600' fill='#1d1d22'/><circle cx='1400.200' cy='493.600' r='1' fill='#fff'/>
<circle cx='1436' cy='490' r='3.600' fill='#1d1d22'/><circle cx='1437.200' cy='488.600' r='1' fill='#fff'/>
<path d='M1389 501.500l9-1' stroke='#fff' stroke-width='1.300'/><path d='M1438 485.500l8-1' stroke='#fff' stroke-width='1.300'/>
<path d='M1416 500 q2.500 5 8 1.500' fill='none' stroke='#e0925a' stroke-width='1.500'/>
<path d='M1399.500 514.500 Q1419 526 1437 511.500' fill='none' stroke='#c66a4c' stroke-width='2.200' stroke-linecap='round'/>
</g>
</svg><div class='a' style='left:0px;top:1000px;width:1920px;height:2px;background:#22a898;'></div><div class='a' style='left:0px;top:1002px;width:1920px;height:78px;background:#ececec;'></div><span style='position:absolute;left:177px;top:1005.91px;line-height:79px;color:#39424c;font-family:"Liberation Serif", serif;font-size:61px;font-weight:400;font-style:normal;white-space:pre;transform-origin:0 50%;transform:scaleX(0.9876);'>Learn English Through Pdf (Audio included) - Englishforall.info</span>
</body></html>
